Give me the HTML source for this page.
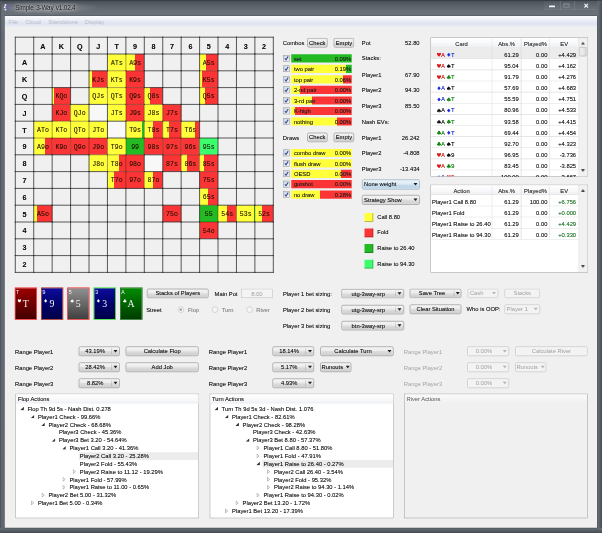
<!DOCTYPE html>
<html><head><meta charset="utf-8"><title>Simple 3-Way v1.02.4</title>
<style>
html,body{margin:0;padding:0;}
body{width:602px;height:533px;overflow:hidden;background:#646a72;font-family:"Liberation Sans",sans-serif;font-size:23.2px;color:#161616;position:relative;}
.t{text-shadow:0 0 1.4px rgba(0,0,0,.45);}
div{position:absolute;box-sizing:border-box;}
svg{display:block;}
.t{white-space:nowrap;line-height:40px;height:40px;margin-top:-20px;}
.r{text-align:right;}
.c{text-align:center;}
.btn{border:2.4px solid #747474;border-radius:6.8px;box-shadow:inset 0 0 0 2px rgba(255,255,255,.8);text-shadow:0 0 1.4px rgba(0,0,0,.45);background:linear-gradient(#f4f4f4 0%,#ebebeb 48%,#dcdcdc 52%,#cfcfcf 100%);text-align:center;white-space:nowrap;overflow:hidden;}
.dis{color:#a0a0a0;}
.btn.dis{border-color:#b4b4b4;background:#f3f3f3;text-shadow:none;}
.dis{text-shadow:none;}
.mono{font-family:"Liberation Mono",monospace;}
.pane{background:#fff;border:2.4px solid #9a9a9a;}
</style></head><body>
<div id="s" style="left:0;top:0;width:2408px;height:2132px;transform:scale(0.25);transform-origin:0 0;filter:blur(1.1px);">

<div style="left:0px;top:0px;width:2408px;height:2132px;background:linear-gradient(#3c4249 0px,#4e545c 7.2px,#5c626a 24px,#686e76 44px,#6c727a 64px,#646a72 160px,#62686f 100%);"></div>
<div style="left:0px;top:0px;width:5.6px;height:2132px;background:linear-gradient(90deg,#4a5058,#5c626a);"></div>
<div style="left:2390.4px;top:0px;width:17.6px;height:2132px;background:linear-gradient(90deg,#6a7078 0%,#5a6068 45%,#474d55 100%);"></div>
<div style="left:0px;top:2112px;width:2408px;height:20px;background:linear-gradient(#686e76 0%,#5a6068 45%,#454b53 100%);"></div>
<div style="left:0px;top:0px;width:2408px;height:3.2px;background:#353b42;"></div>
<div style="left:16.8px;top:61.6px;width:2373.6px;height:2052px;background:#4d535b;"></div>
<div style="left:8px;top:6px;width:380px;height:48px;background:radial-gradient(ellipse at 45% 50%,rgba(255,255,255,.22) 0%,rgba(255,255,255,.12) 45%,rgba(255,255,255,0) 75%);"></div>
<div style="left:13.6px;top:14.4px;width:29.6px;height:30.4px;"><svg width="29.6" height="30.4" viewBox="0 0 15 15"><path d="M11.5 1.5 L7 7.5 L11.5 13.5" stroke="#6f60b4" stroke-width="3.4" fill="none" stroke-linejoin="round"/><circle cx="4" cy="2.8" r="1.9" fill="#eeeef4"/><circle cx="2.6" cy="7.5" r="1.9" fill="#eeeef4"/><circle cx="4" cy="12.2" r="1.9" fill="#eeeef4"/></svg></div>
<div class="t" style="left:61.2px;top:29.6px;font-size:25.6px;letter-spacing:-0.8px;word-spacing:3.6px;color:#14161a;text-shadow:0 0 8px rgba(255,255,255,.7),0 0 16px rgba(255,255,255,.55),0 0 24px rgba(255,255,255,.35);">Simple 3-Way v1.02.4</div>
<div style="left:2196px;top:22.4px;width:24px;height:6.4px;background:#f0f2f4;border-radius:2px;"></div>
<div style="left:2254.4px;top:13.6px;width:24px;height:16.8px;border:3.6px solid #8c9096;border-top-width:4.8px;"></div>
<div style="left:2334.4px;top:12px;width:21.6px;height:21.6px;"><svg width="21.6" height="21.6" viewBox="0 0 7 7"><path d="M1.2 1.2 L5.8 5.8 M5.8 1.2 L1.2 5.8" stroke="#f2f3f5" stroke-width="1.5"/></svg></div>
<div style="left:2174px;top:3.2px;width:212px;height:37.6px;border:2px solid rgba(160,168,178,.55);border-top:none;border-radius:0 0 8px 8px;background:rgba(255,255,255,.04);"></div>
<div style="left:2240.8px;top:4px;width:2px;height:36px;background:rgba(160,168,178,.5);"></div>
<div style="left:2297.6px;top:4px;width:2px;height:36px;background:rgba(160,168,178,.5);"></div>
<div style="left:19.2px;top:64px;width:2368.8px;height:2047.2px;background:#f0f0f0;"></div>
<div style="left:19.2px;top:64px;width:2368.8px;height:40.8px;background:linear-gradient(#fbfcfe 0%,#eef1f8 35%,#dfe4f1 70%,#e6e9f4 100%);"></div>
<div class="t" style="left:34.4px;top:85.6px;color:#b9bdcb;font-size:23.6px;text-shadow:none;">File</div>
<div class="t" style="left:101.2px;top:85.6px;color:#b9bdcb;font-size:23.6px;text-shadow:none;">Cloud</div>
<div class="t" style="left:192.8px;top:85.6px;color:#b9bdcb;font-size:23.6px;text-shadow:none;">Standalone</div>
<div class="t" style="left:339.2px;top:85.6px;color:#b9bdcb;font-size:23.6px;text-shadow:none;">Display</div>
<div id="grid" style="left:0;top:0;width:0;height:0;">
<div style="left:61.2px;top:148.8px;width:1032.08px;height:940.8px;background:#f0f0f0;"></div>
<div style="left:429.8px;top:216px;width:73.72px;height:67.2px;background:#ffff3a;"><div class="t mono c" style="left:0;width:100%;top:50%;font-size:26.4px;margin-top:-17.6px;text-shadow:0 0 1.2px rgba(30,15,0,.5);color:rgba(30,15,0,.84);">ATs</div></div>
<div style="left:503.52px;top:216px;width:73.72px;height:67.2px;background:linear-gradient(90deg,#ffff3a 0%,#ffff3a 50%,#fb3535 50%,#fb3535 100%);"><div class="t mono c" style="left:0;width:100%;top:50%;font-size:26.4px;margin-top:-17.6px;text-shadow:0 0 1.2px rgba(30,15,0,.5);color:rgba(30,15,0,.84);">A9s</div></div>
<div style="left:798.4px;top:216px;width:73.72px;height:67.2px;background:linear-gradient(90deg,#ffff3a 0%,#ffff3a 35%,#fb3535 35%,#fb3535 100%);"><div class="t mono c" style="left:0;width:100%;top:50%;font-size:26.4px;margin-top:-17.6px;text-shadow:0 0 1.2px rgba(30,15,0,.5);color:rgba(30,15,0,.84);">A5s</div></div>
<div style="left:356.08px;top:283.2px;width:73.72px;height:67.2px;background:linear-gradient(90deg,#ffff3a 0%,#ffff3a 15%,#fb3535 15%,#fb3535 100%);"><div class="t mono c" style="left:0;width:100%;top:50%;font-size:26.4px;margin-top:-17.6px;text-shadow:0 0 1.2px rgba(30,15,0,.5);color:rgba(30,15,0,.84);">KJs</div></div>
<div style="left:429.8px;top:283.2px;width:73.72px;height:67.2px;background:#ffff3a;"><div class="t mono c" style="left:0;width:100%;top:50%;font-size:26.4px;margin-top:-17.6px;text-shadow:0 0 1.2px rgba(30,15,0,.5);color:rgba(30,15,0,.84);">KTs</div></div>
<div style="left:503.52px;top:283.2px;width:73.72px;height:67.2px;background:#fb3535;"><div class="t mono c" style="left:0;width:100%;top:50%;font-size:26.4px;margin-top:-17.6px;text-shadow:0 0 1.2px rgba(30,15,0,.5);color:rgba(30,15,0,.84);">K9s</div></div>
<div style="left:798.4px;top:283.2px;width:73.72px;height:67.2px;background:linear-gradient(90deg,#ffff3a 0%,#ffff3a 12%,#fb3535 12%,#fb3535 100%);"><div class="t mono c" style="left:0;width:100%;top:50%;font-size:26.4px;margin-top:-17.6px;text-shadow:0 0 1.2px rgba(30,15,0,.5);color:rgba(30,15,0,.84);">K5s</div></div>
<div style="left:208.64px;top:350.4px;width:73.72px;height:67.2px;background:linear-gradient(90deg,#ffff3a 0%,#ffff3a 10%,#fb3535 10%,#fb3535 100%);"><div class="t mono c" style="left:0;width:100%;top:50%;font-size:26.4px;margin-top:-17.6px;text-shadow:0 0 1.2px rgba(30,15,0,.5);color:rgba(30,15,0,.84);">KQo</div></div>
<div style="left:356.08px;top:350.4px;width:73.72px;height:67.2px;background:#ffff3a;"><div class="t mono c" style="left:0;width:100%;top:50%;font-size:26.4px;margin-top:-17.6px;text-shadow:0 0 1.2px rgba(30,15,0,.5);color:rgba(30,15,0,.84);">QJs</div></div>
<div style="left:429.8px;top:350.4px;width:73.72px;height:67.2px;background:#ffff3a;"><div class="t mono c" style="left:0;width:100%;top:50%;font-size:26.4px;margin-top:-17.6px;text-shadow:0 0 1.2px rgba(30,15,0,.5);color:rgba(30,15,0,.84);">QTs</div></div>
<div style="left:503.52px;top:350.4px;width:73.72px;height:67.2px;background:#fb3535;"><div class="t mono c" style="left:0;width:100%;top:50%;font-size:26.4px;margin-top:-17.6px;text-shadow:0 0 1.2px rgba(30,15,0,.5);color:rgba(30,15,0,.84);">Q9s</div></div>
<div style="left:577.24px;top:350.4px;width:73.72px;height:67.2px;background:linear-gradient(90deg,#ffff3a 0%,#ffff3a 30%,#fb3535 30%,#fb3535 100%);"><div class="t mono c" style="left:0;width:100%;top:50%;font-size:26.4px;margin-top:-17.6px;text-shadow:0 0 1.2px rgba(30,15,0,.5);color:rgba(30,15,0,.84);">Q8s</div></div>
<div style="left:798.4px;top:350.4px;width:73.72px;height:67.2px;background:linear-gradient(90deg,#ffff3a 0%,#ffff3a 30%,#fb3535 30%,#fb3535 100%);"><div class="t mono c" style="left:0;width:100%;top:50%;font-size:26.4px;margin-top:-17.6px;text-shadow:0 0 1.2px rgba(30,15,0,.5);color:rgba(30,15,0,.84);">Q5s</div></div>
<div style="left:208.64px;top:417.6px;width:73.72px;height:67.2px;background:#fb3535;"><div class="t mono c" style="left:0;width:100%;top:50%;font-size:26.4px;margin-top:-17.6px;text-shadow:0 0 1.2px rgba(30,15,0,.5);color:rgba(30,15,0,.84);">KJo</div></div>
<div style="left:282.36px;top:417.6px;width:73.72px;height:67.2px;background:#ffff3a;"><div class="t mono c" style="left:0;width:100%;top:50%;font-size:26.4px;margin-top:-17.6px;text-shadow:0 0 1.2px rgba(30,15,0,.5);color:rgba(30,15,0,.84);">QJo</div></div>
<div style="left:429.8px;top:417.6px;width:73.72px;height:67.2px;background:#ffff3a;"><div class="t mono c" style="left:0;width:100%;top:50%;font-size:26.4px;margin-top:-17.6px;text-shadow:0 0 1.2px rgba(30,15,0,.5);color:rgba(30,15,0,.84);">JTs</div></div>
<div style="left:503.52px;top:417.6px;width:73.72px;height:67.2px;background:#fb3535;"><div class="t mono c" style="left:0;width:100%;top:50%;font-size:26.4px;margin-top:-17.6px;text-shadow:0 0 1.2px rgba(30,15,0,.5);color:rgba(30,15,0,.84);">J9s</div></div>
<div style="left:577.24px;top:417.6px;width:73.72px;height:67.2px;background:#ffff3a;"><div class="t mono c" style="left:0;width:100%;top:50%;font-size:26.4px;margin-top:-17.6px;text-shadow:0 0 1.2px rgba(30,15,0,.5);color:rgba(30,15,0,.84);">J8s</div></div>
<div style="left:650.96px;top:417.6px;width:73.72px;height:67.2px;background:#fb3535;"><div class="t mono c" style="left:0;width:100%;top:50%;font-size:26.4px;margin-top:-17.6px;text-shadow:0 0 1.2px rgba(30,15,0,.5);color:rgba(30,15,0,.84);">J7s</div></div>
<div style="left:134.92px;top:484.8px;width:73.72px;height:67.2px;background:#ffff3a;"><div class="t mono c" style="left:0;width:100%;top:50%;font-size:26.4px;margin-top:-17.6px;text-shadow:0 0 1.2px rgba(30,15,0,.5);color:rgba(30,15,0,.84);">ATo</div></div>
<div style="left:208.64px;top:484.8px;width:73.72px;height:67.2px;background:#ffff3a;"><div class="t mono c" style="left:0;width:100%;top:50%;font-size:26.4px;margin-top:-17.6px;text-shadow:0 0 1.2px rgba(30,15,0,.5);color:rgba(30,15,0,.84);">KTo</div></div>
<div style="left:282.36px;top:484.8px;width:73.72px;height:67.2px;background:#ffff3a;"><div class="t mono c" style="left:0;width:100%;top:50%;font-size:26.4px;margin-top:-17.6px;text-shadow:0 0 1.2px rgba(30,15,0,.5);color:rgba(30,15,0,.84);">QTo</div></div>
<div style="left:356.08px;top:484.8px;width:73.72px;height:67.2px;background:linear-gradient(90deg,#ffff3a 0%,#ffff3a 95%,#fb3535 95%,#fb3535 100%);"><div class="t mono c" style="left:0;width:100%;top:50%;font-size:26.4px;margin-top:-17.6px;text-shadow:0 0 1.2px rgba(30,15,0,.5);color:rgba(30,15,0,.84);">JTo</div></div>
<div style="left:503.52px;top:484.8px;width:73.72px;height:67.2px;background:linear-gradient(90deg,#ffff3a 0%,#ffff3a 90%,#24ba24 90%,#24ba24 100%);"><div class="t mono c" style="left:0;width:100%;top:50%;font-size:26.4px;margin-top:-17.6px;text-shadow:0 0 1.2px rgba(30,15,0,.5);color:rgba(30,15,0,.84);">T9s</div></div>
<div style="left:577.24px;top:484.8px;width:73.72px;height:67.2px;background:linear-gradient(90deg,#ffff3a 0%,#ffff3a 50%,#fb3535 50%,#fb3535 100%);"><div class="t mono c" style="left:0;width:100%;top:50%;font-size:26.4px;margin-top:-17.6px;text-shadow:0 0 1.2px rgba(30,15,0,.5);color:rgba(30,15,0,.84);">T8s</div></div>
<div style="left:650.96px;top:484.8px;width:73.72px;height:67.2px;background:linear-gradient(90deg,#ffff3a 0%,#ffff3a 35%,#fb3535 35%,#fb3535 100%);"><div class="t mono c" style="left:0;width:100%;top:50%;font-size:26.4px;margin-top:-17.6px;text-shadow:0 0 1.2px rgba(30,15,0,.5);color:rgba(30,15,0,.84);">T7s</div></div>
<div style="left:724.68px;top:484.8px;width:73.72px;height:67.2px;background:linear-gradient(90deg,#ffff3a 0%,#ffff3a 75%,#fb3535 75%,#fb3535 100%);"><div class="t mono c" style="left:0;width:100%;top:50%;font-size:26.4px;margin-top:-17.6px;text-shadow:0 0 1.2px rgba(30,15,0,.5);color:rgba(30,15,0,.84);">T6s</div></div>
<div style="left:134.92px;top:552px;width:73.72px;height:67.2px;background:linear-gradient(90deg,#ffff3a 0%,#ffff3a 63%,#fb3535 63%,#fb3535 100%);"><div class="t mono c" style="left:0;width:100%;top:50%;font-size:26.4px;margin-top:-17.6px;text-shadow:0 0 1.2px rgba(30,15,0,.5);color:rgba(30,15,0,.84);">A9o</div></div>
<div style="left:208.64px;top:552px;width:73.72px;height:67.2px;background:#fb3535;"><div class="t mono c" style="left:0;width:100%;top:50%;font-size:26.4px;margin-top:-17.6px;text-shadow:0 0 1.2px rgba(30,15,0,.5);color:rgba(30,15,0,.84);">K9o</div></div>
<div style="left:282.36px;top:552px;width:73.72px;height:67.2px;background:#fb3535;"><div class="t mono c" style="left:0;width:100%;top:50%;font-size:26.4px;margin-top:-17.6px;text-shadow:0 0 1.2px rgba(30,15,0,.5);color:rgba(30,15,0,.84);">Q9o</div></div>
<div style="left:356.08px;top:552px;width:73.72px;height:67.2px;background:#fb3535;"><div class="t mono c" style="left:0;width:100%;top:50%;font-size:26.4px;margin-top:-17.6px;text-shadow:0 0 1.2px rgba(30,15,0,.5);color:rgba(30,15,0,.84);">J9o</div></div>
<div style="left:429.8px;top:552px;width:73.72px;height:67.2px;background:#ffff3a;"><div class="t mono c" style="left:0;width:100%;top:50%;font-size:26.4px;margin-top:-17.6px;text-shadow:0 0 1.2px rgba(30,15,0,.5);color:rgba(30,15,0,.84);">T9o</div></div>
<div style="left:503.52px;top:552px;width:73.72px;height:67.2px;background:#24ba24;"><div class="t mono c" style="left:0;width:100%;top:50%;font-size:26.4px;margin-top:-17.6px;text-shadow:0 0 1.2px rgba(30,15,0,.5);color:rgba(30,15,0,.84);">99</div></div>
<div style="left:577.24px;top:552px;width:73.72px;height:67.2px;background:#fb3535;"><div class="t mono c" style="left:0;width:100%;top:50%;font-size:26.4px;margin-top:-17.6px;text-shadow:0 0 1.2px rgba(30,15,0,.5);color:rgba(30,15,0,.84);">98s</div></div>
<div style="left:650.96px;top:552px;width:73.72px;height:67.2px;background:#fb3535;"><div class="t mono c" style="left:0;width:100%;top:50%;font-size:26.4px;margin-top:-17.6px;text-shadow:0 0 1.2px rgba(30,15,0,.5);color:rgba(30,15,0,.84);">97s</div></div>
<div style="left:724.68px;top:552px;width:73.72px;height:67.2px;background:#fb3535;"><div class="t mono c" style="left:0;width:100%;top:50%;font-size:26.4px;margin-top:-17.6px;text-shadow:0 0 1.2px rgba(30,15,0,.5);color:rgba(30,15,0,.84);">96s</div></div>
<div style="left:798.4px;top:552px;width:73.72px;height:67.2px;background:#3cff6e;"><div class="t mono c" style="left:0;width:100%;top:50%;font-size:26.4px;margin-top:-17.6px;text-shadow:0 0 1.2px rgba(30,15,0,.5);color:rgba(30,15,0,.84);">95s</div></div>
<div style="left:356.08px;top:619.2px;width:73.72px;height:67.2px;background:#ffff3a;"><div class="t mono c" style="left:0;width:100%;top:50%;font-size:26.4px;margin-top:-17.6px;text-shadow:0 0 1.2px rgba(30,15,0,.5);color:rgba(30,15,0,.84);">J8o</div></div>
<div style="left:429.8px;top:619.2px;width:73.72px;height:67.2px;background:linear-gradient(90deg,#ffff3a 0%,#ffff3a 60%,#fb3535 60%,#fb3535 100%);"><div class="t mono c" style="left:0;width:100%;top:50%;font-size:26.4px;margin-top:-17.6px;text-shadow:0 0 1.2px rgba(30,15,0,.5);color:rgba(30,15,0,.84);">T8o</div></div>
<div style="left:503.52px;top:619.2px;width:73.72px;height:67.2px;background:#fb3535;"><div class="t mono c" style="left:0;width:100%;top:50%;font-size:26.4px;margin-top:-17.6px;text-shadow:0 0 1.2px rgba(30,15,0,.5);color:rgba(30,15,0,.84);">98o</div></div>
<div style="left:650.96px;top:619.2px;width:73.72px;height:67.2px;background:#fb3535;"><div class="t mono c" style="left:0;width:100%;top:50%;font-size:26.4px;margin-top:-17.6px;text-shadow:0 0 1.2px rgba(30,15,0,.5);color:rgba(30,15,0,.84);">87s</div></div>
<div style="left:724.68px;top:619.2px;width:73.72px;height:67.2px;background:linear-gradient(90deg,#ffff3a 0%,#ffff3a 30%,#fb3535 30%,#fb3535 100%);"><div class="t mono c" style="left:0;width:100%;top:50%;font-size:26.4px;margin-top:-17.6px;text-shadow:0 0 1.2px rgba(30,15,0,.5);color:rgba(30,15,0,.84);">86s</div></div>
<div style="left:798.4px;top:619.2px;width:73.72px;height:67.2px;background:linear-gradient(90deg,#ffff3a 0%,#ffff3a 25%,#fb3535 25%,#fb3535 100%);"><div class="t mono c" style="left:0;width:100%;top:50%;font-size:26.4px;margin-top:-17.6px;text-shadow:0 0 1.2px rgba(30,15,0,.5);color:rgba(30,15,0,.84);">85s</div></div>
<div style="left:429.8px;top:686.4px;width:73.72px;height:67.2px;background:linear-gradient(90deg,#ffff3a 0%,#ffff3a 33%,#fb3535 33%,#fb3535 100%);"><div class="t mono c" style="left:0;width:100%;top:50%;font-size:26.4px;margin-top:-17.6px;text-shadow:0 0 1.2px rgba(30,15,0,.5);color:rgba(30,15,0,.84);">T7o</div></div>
<div style="left:503.52px;top:686.4px;width:73.72px;height:67.2px;background:#fb3535;"><div class="t mono c" style="left:0;width:100%;top:50%;font-size:26.4px;margin-top:-17.6px;text-shadow:0 0 1.2px rgba(30,15,0,.5);color:rgba(30,15,0,.84);">97o</div></div>
<div style="left:577.24px;top:686.4px;width:73.72px;height:67.2px;background:linear-gradient(90deg,#ffff3a 0%,#ffff3a 45%,#fb3535 45%,#fb3535 100%);"><div class="t mono c" style="left:0;width:100%;top:50%;font-size:26.4px;margin-top:-17.6px;text-shadow:0 0 1.2px rgba(30,15,0,.5);color:rgba(30,15,0,.84);">87o</div></div>
<div style="left:798.4px;top:686.4px;width:73.72px;height:67.2px;background:#fb3535;"><div class="t mono c" style="left:0;width:100%;top:50%;font-size:26.4px;margin-top:-17.6px;text-shadow:0 0 1.2px rgba(30,15,0,.5);color:rgba(30,15,0,.84);">75s</div></div>
<div style="left:798.4px;top:753.6px;width:73.72px;height:67.2px;background:linear-gradient(90deg,#ffff3a 0%,#ffff3a 45%,#fb3535 45%,#fb3535 100%);"><div class="t mono c" style="left:0;width:100%;top:50%;font-size:26.4px;margin-top:-17.6px;text-shadow:0 0 1.2px rgba(30,15,0,.5);color:rgba(30,15,0,.84);">65s</div></div>
<div style="left:134.92px;top:820.8px;width:73.72px;height:67.2px;background:linear-gradient(90deg,#ffff3a 0%,#ffff3a 20%,#fb3535 20%,#fb3535 100%);"><div class="t mono c" style="left:0;width:100%;top:50%;font-size:26.4px;margin-top:-17.6px;text-shadow:0 0 1.2px rgba(30,15,0,.5);color:rgba(30,15,0,.84);">A5o</div></div>
<div style="left:650.96px;top:820.8px;width:73.72px;height:67.2px;background:#fb3535;"><div class="t mono c" style="left:0;width:100%;top:50%;font-size:26.4px;margin-top:-17.6px;text-shadow:0 0 1.2px rgba(30,15,0,.5);color:rgba(30,15,0,.84);">75o</div></div>
<div style="left:798.4px;top:820.8px;width:73.72px;height:67.2px;background:#24ba24;"><div class="t mono c" style="left:0;width:100%;top:50%;font-size:26.4px;margin-top:-17.6px;text-shadow:0 0 1.2px rgba(30,15,0,.5);color:rgba(30,15,0,.84);">55</div></div>
<div style="left:872.12px;top:820.8px;width:73.72px;height:67.2px;background:linear-gradient(90deg,#ffff3a 0%,#ffff3a 50%,#fb3535 50%,#fb3535 100%);"><div class="t mono c" style="left:0;width:100%;top:50%;font-size:26.4px;margin-top:-17.6px;text-shadow:0 0 1.2px rgba(30,15,0,.5);color:rgba(30,15,0,.84);">54s</div></div>
<div style="left:945.84px;top:820.8px;width:73.72px;height:67.2px;background:linear-gradient(90deg,#ffff3a 0%,#ffff3a 92%,#24ba24 92%,#24ba24 100%);"><div class="t mono c" style="left:0;width:100%;top:50%;font-size:26.4px;margin-top:-17.6px;text-shadow:0 0 1.2px rgba(30,15,0,.5);color:rgba(30,15,0,.84);">53s</div></div>
<div style="left:1019.56px;top:820.8px;width:73.72px;height:67.2px;background:linear-gradient(90deg,#ffff3a 0%,#ffff3a 40%,#fb3535 40%,#fb3535 100%);"><div class="t mono c" style="left:0;width:100%;top:50%;font-size:26.4px;margin-top:-17.6px;text-shadow:0 0 1.2px rgba(30,15,0,.5);color:rgba(30,15,0,.84);">52s</div></div>
<div style="left:798.4px;top:888px;width:73.72px;height:67.2px;background:linear-gradient(90deg,#ffff3a 0%,#ffff3a 5%,#fb3535 5%,#fb3535 100%);"><div class="t mono c" style="left:0;width:100%;top:50%;font-size:26.4px;margin-top:-17.6px;text-shadow:0 0 1.2px rgba(30,15,0,.5);color:rgba(30,15,0,.84);">54o</div></div>
<div style="left:577.24px;top:619.2px;width:73.72px;height:67.2px;background:#f8f8f8;"></div>
<div style="left:429.8px;top:484.8px;width:73.72px;height:67.2px;background:#f8f8f8;"></div>
<div style="left:356.08px;top:417.6px;width:73.72px;height:67.2px;background:#f8f8f8;"></div>
<svg style="position:absolute;left:0px;top:0px;width:1200px;height:1200px;" viewBox="0 0 300 300"><path d="M52.16 120.75v17.70M52.16 137.55v17.70M70.59 103.95v17.70M70.59 120.75v17.70M70.59 137.55v17.70M89.02 120.75v17.70M89.02 137.55v17.70M107.45 70.35v17.70M107.45 87.15v17.70M107.45 137.55v17.70M107.45 154.35v17.70M125.88 53.55v17.70M125.88 70.35v17.70M125.88 87.15v17.70M125.88 103.95v17.70M125.88 137.55v17.70M125.88 154.35v17.70M125.88 171.15v17.70M144.31 87.15v17.70M144.31 103.95v17.70M144.31 120.75v17.70M144.31 137.55v17.70M144.31 171.15v17.70M162.74 103.95v17.70M162.74 120.75v17.70M162.74 137.55v17.70M181.17 120.75v17.70M181.17 137.55v17.70M181.17 154.35v17.70M199.60 137.55v17.70M199.60 154.35v17.70M218.03 204.75v17.70M236.46 204.75v17.70M254.89 204.75v17.70M107.00 70.80h19.33M125.43 70.80h19.33M199.15 70.80h19.33M88.57 87.60h19.33M107.00 87.60h19.33M125.43 87.60h19.33M199.15 87.60h19.33M51.71 104.40h19.33M107.00 104.40h19.33M125.43 104.40h19.33M143.86 104.40h19.33M51.71 121.20h19.33M70.14 121.20h19.33M125.43 121.20h19.33M143.86 121.20h19.33M162.29 121.20h19.33M33.28 138.00h19.33M51.71 138.00h19.33M70.14 138.00h19.33M88.57 138.00h19.33M125.43 138.00h19.33M143.86 138.00h19.33M162.29 138.00h19.33M180.72 138.00h19.33M88.57 154.80h19.33M107.00 154.80h19.33M125.43 154.80h19.33M162.29 154.80h19.33M180.72 154.80h19.33M199.15 154.80h19.33M107.00 171.60h19.33M125.43 171.60h19.33M199.15 171.60h19.33M199.15 188.40h19.33M199.15 205.20h19.33M199.15 222.00h19.33" stroke="rgba(50,25,0,.5)" stroke-width="0.8" fill="none"/><path d="M15.30 36.75v17.70M15.30 53.55v17.70M15.30 70.35v17.70M15.30 87.15v17.70M15.30 103.95v17.70M15.30 120.75v17.70M15.30 137.55v17.70M15.30 154.35v17.70M15.30 171.15v17.70M15.30 187.95v17.70M15.30 204.75v17.70M15.30 221.55v17.70M15.30 238.35v17.70M15.30 255.15v17.70M33.73 36.75v17.70M33.73 53.55v17.70M33.73 70.35v17.70M33.73 87.15v17.70M33.73 103.95v17.70M33.73 120.75v17.70M33.73 137.55v17.70M33.73 154.35v17.70M33.73 171.15v17.70M33.73 187.95v17.70M33.73 204.75v17.70M33.73 221.55v17.70M33.73 238.35v17.70M33.73 255.15v17.70M52.16 36.75v17.70M52.16 53.55v17.70M52.16 70.35v17.70M52.16 87.15v17.70M52.16 103.95v17.70M52.16 154.35v17.70M52.16 171.15v17.70M52.16 187.95v17.70M52.16 204.75v17.70M52.16 221.55v17.70M52.16 238.35v17.70M52.16 255.15v17.70M70.59 36.75v17.70M70.59 53.55v17.70M70.59 70.35v17.70M70.59 87.15v17.70M70.59 154.35v17.70M70.59 171.15v17.70M70.59 187.95v17.70M70.59 204.75v17.70M70.59 221.55v17.70M70.59 238.35v17.70M70.59 255.15v17.70M89.02 36.75v17.70M89.02 53.55v17.70M89.02 70.35v17.70M89.02 87.15v17.70M89.02 103.95v17.70M89.02 154.35v17.70M89.02 171.15v17.70M89.02 187.95v17.70M89.02 204.75v17.70M89.02 221.55v17.70M89.02 238.35v17.70M89.02 255.15v17.70M107.45 36.75v17.70M107.45 53.55v17.70M107.45 103.95v17.70M107.45 120.75v17.70M107.45 171.15v17.70M107.45 187.95v17.70M107.45 204.75v17.70M107.45 221.55v17.70M107.45 238.35v17.70M107.45 255.15v17.70M125.88 36.75v17.70M125.88 120.75v17.70M125.88 187.95v17.70M125.88 204.75v17.70M125.88 221.55v17.70M125.88 238.35v17.70M125.88 255.15v17.70M144.31 36.75v17.70M144.31 53.55v17.70M144.31 70.35v17.70M144.31 154.35v17.70M144.31 187.95v17.70M144.31 204.75v17.70M144.31 221.55v17.70M144.31 238.35v17.70M144.31 255.15v17.70M162.74 36.75v17.70M162.74 53.55v17.70M162.74 70.35v17.70M162.74 87.15v17.70M162.74 154.35v17.70M162.74 171.15v17.70M162.74 187.95v17.70M162.74 204.75v17.70M162.74 221.55v17.70M162.74 238.35v17.70M162.74 255.15v17.70M181.17 36.75v17.70M181.17 53.55v17.70M181.17 70.35v17.70M181.17 87.15v17.70M181.17 103.95v17.70M181.17 171.15v17.70M181.17 187.95v17.70M181.17 204.75v17.70M181.17 221.55v17.70M181.17 238.35v17.70M181.17 255.15v17.70M199.60 36.75v17.70M199.60 53.55v17.70M199.60 70.35v17.70M199.60 87.15v17.70M199.60 103.95v17.70M199.60 120.75v17.70M199.60 171.15v17.70M199.60 187.95v17.70M199.60 204.75v17.70M199.60 221.55v17.70M199.60 238.35v17.70M199.60 255.15v17.70M218.03 36.75v17.70M218.03 53.55v17.70M218.03 70.35v17.70M218.03 87.15v17.70M218.03 103.95v17.70M218.03 120.75v17.70M218.03 137.55v17.70M218.03 154.35v17.70M218.03 171.15v17.70M218.03 187.95v17.70M218.03 221.55v17.70M218.03 238.35v17.70M218.03 255.15v17.70M236.46 36.75v17.70M236.46 53.55v17.70M236.46 70.35v17.70M236.46 87.15v17.70M236.46 103.95v17.70M236.46 120.75v17.70M236.46 137.55v17.70M236.46 154.35v17.70M236.46 171.15v17.70M236.46 187.95v17.70M236.46 221.55v17.70M236.46 238.35v17.70M236.46 255.15v17.70M254.89 36.75v17.70M254.89 53.55v17.70M254.89 70.35v17.70M254.89 87.15v17.70M254.89 103.95v17.70M254.89 120.75v17.70M254.89 137.55v17.70M254.89 154.35v17.70M254.89 171.15v17.70M254.89 187.95v17.70M254.89 221.55v17.70M254.89 238.35v17.70M254.89 255.15v17.70M273.32 36.75v17.70M273.32 53.55v17.70M273.32 70.35v17.70M273.32 87.15v17.70M273.32 103.95v17.70M273.32 120.75v17.70M273.32 137.55v17.70M273.32 154.35v17.70M273.32 171.15v17.70M273.32 187.95v17.70M273.32 204.75v17.70M273.32 221.55v17.70M273.32 238.35v17.70M273.32 255.15v17.70M14.85 37.20h19.33M33.28 37.20h19.33M51.71 37.20h19.33M70.14 37.20h19.33M88.57 37.20h19.33M107.00 37.20h19.33M125.43 37.20h19.33M143.86 37.20h19.33M162.29 37.20h19.33M180.72 37.20h19.33M199.15 37.20h19.33M217.58 37.20h19.33M236.01 37.20h19.33M254.44 37.20h19.33M14.85 54.00h19.33M33.28 54.00h19.33M51.71 54.00h19.33M70.14 54.00h19.33M88.57 54.00h19.33M107.00 54.00h19.33M125.43 54.00h19.33M143.86 54.00h19.33M162.29 54.00h19.33M180.72 54.00h19.33M199.15 54.00h19.33M217.58 54.00h19.33M236.01 54.00h19.33M254.44 54.00h19.33M14.85 70.80h19.33M33.28 70.80h19.33M51.71 70.80h19.33M70.14 70.80h19.33M88.57 70.80h19.33M143.86 70.80h19.33M162.29 70.80h19.33M180.72 70.80h19.33M217.58 70.80h19.33M236.01 70.80h19.33M254.44 70.80h19.33M14.85 87.60h19.33M33.28 87.60h19.33M51.71 87.60h19.33M70.14 87.60h19.33M143.86 87.60h19.33M162.29 87.60h19.33M180.72 87.60h19.33M217.58 87.60h19.33M236.01 87.60h19.33M254.44 87.60h19.33M14.85 104.40h19.33M33.28 104.40h19.33M70.14 104.40h19.33M88.57 104.40h19.33M162.29 104.40h19.33M180.72 104.40h19.33M199.15 104.40h19.33M217.58 104.40h19.33M236.01 104.40h19.33M254.44 104.40h19.33M14.85 121.20h19.33M33.28 121.20h19.33M88.57 121.20h19.33M107.00 121.20h19.33M180.72 121.20h19.33M199.15 121.20h19.33M217.58 121.20h19.33M236.01 121.20h19.33M254.44 121.20h19.33M14.85 138.00h19.33M107.00 138.00h19.33M199.15 138.00h19.33M217.58 138.00h19.33M236.01 138.00h19.33M254.44 138.00h19.33M14.85 154.80h19.33M33.28 154.80h19.33M51.71 154.80h19.33M70.14 154.80h19.33M143.86 154.80h19.33M217.58 154.80h19.33M236.01 154.80h19.33M254.44 154.80h19.33M14.85 171.60h19.33M33.28 171.60h19.33M51.71 171.60h19.33M70.14 171.60h19.33M88.57 171.60h19.33M143.86 171.60h19.33M162.29 171.60h19.33M180.72 171.60h19.33M217.58 171.60h19.33M236.01 171.60h19.33M254.44 171.60h19.33M14.85 188.40h19.33M33.28 188.40h19.33M51.71 188.40h19.33M70.14 188.40h19.33M88.57 188.40h19.33M107.00 188.40h19.33M125.43 188.40h19.33M143.86 188.40h19.33M162.29 188.40h19.33M180.72 188.40h19.33M217.58 188.40h19.33M236.01 188.40h19.33M254.44 188.40h19.33M14.85 205.20h19.33M33.28 205.20h19.33M51.71 205.20h19.33M70.14 205.20h19.33M88.57 205.20h19.33M107.00 205.20h19.33M125.43 205.20h19.33M143.86 205.20h19.33M162.29 205.20h19.33M180.72 205.20h19.33M217.58 205.20h19.33M236.01 205.20h19.33M254.44 205.20h19.33M14.85 222.00h19.33M33.28 222.00h19.33M51.71 222.00h19.33M70.14 222.00h19.33M88.57 222.00h19.33M107.00 222.00h19.33M125.43 222.00h19.33M143.86 222.00h19.33M162.29 222.00h19.33M180.72 222.00h19.33M217.58 222.00h19.33M236.01 222.00h19.33M254.44 222.00h19.33M14.85 238.80h19.33M33.28 238.80h19.33M51.71 238.80h19.33M70.14 238.80h19.33M88.57 238.80h19.33M107.00 238.80h19.33M125.43 238.80h19.33M143.86 238.80h19.33M162.29 238.80h19.33M180.72 238.80h19.33M199.15 238.80h19.33M217.58 238.80h19.33M236.01 238.80h19.33M254.44 238.80h19.33M14.85 255.60h19.33M33.28 255.60h19.33M51.71 255.60h19.33M70.14 255.60h19.33M88.57 255.60h19.33M107.00 255.60h19.33M125.43 255.60h19.33M143.86 255.60h19.33M162.29 255.60h19.33M180.72 255.60h19.33M199.15 255.60h19.33M217.58 255.60h19.33M236.01 255.60h19.33M254.44 255.60h19.33M14.85 272.40h19.33M33.28 272.40h19.33M51.71 272.40h19.33M70.14 272.40h19.33M88.57 272.40h19.33M107.00 272.40h19.33M125.43 272.40h19.33M143.86 272.40h19.33M162.29 272.40h19.33M180.72 272.40h19.33M199.15 272.40h19.33M217.58 272.40h19.33M236.01 272.40h19.33M254.44 272.40h19.33" stroke="rgba(38,38,38,.8)" stroke-width="0.95" fill="none"/></svg>
<div class="t c" style="left:-68.2px;width:480px;top:183.6px;font-weight:bold;font-size:28.8px;color:#111;">A</div>
<div class="t c" style="left:-141.92px;width:480px;top:250.8px;font-weight:bold;font-size:28.8px;color:#111;">A</div>
<div class="t c" style="left:5.52px;width:480px;top:183.6px;font-weight:bold;font-size:28.8px;color:#111;">K</div>
<div class="t c" style="left:-141.92px;width:480px;top:318px;font-weight:bold;font-size:28.8px;color:#111;">K</div>
<div class="t c" style="left:79.2px;width:480px;top:183.6px;font-weight:bold;font-size:28.8px;color:#111;">Q</div>
<div class="t c" style="left:-141.92px;width:480px;top:385.2px;font-weight:bold;font-size:28.8px;color:#111;">Q</div>
<div class="t c" style="left:152.92px;width:480px;top:183.6px;font-weight:bold;font-size:28.8px;color:#111;">J</div>
<div class="t c" style="left:-141.92px;width:480px;top:452.4px;font-weight:bold;font-size:28.8px;color:#111;">J</div>
<div class="t c" style="left:226.64px;width:480px;top:183.6px;font-weight:bold;font-size:28.8px;color:#111;">T</div>
<div class="t c" style="left:-141.92px;width:480px;top:519.6px;font-weight:bold;font-size:28.8px;color:#111;">T</div>
<div class="t c" style="left:300.36px;width:480px;top:183.6px;font-weight:bold;font-size:28.8px;color:#111;">9</div>
<div class="t c" style="left:-141.92px;width:480px;top:586.8px;font-weight:bold;font-size:28.8px;color:#111;">9</div>
<div class="t c" style="left:374.12px;width:480px;top:183.6px;font-weight:bold;font-size:28.8px;color:#111;">8</div>
<div class="t c" style="left:-141.92px;width:480px;top:654px;font-weight:bold;font-size:28.8px;color:#111;">8</div>
<div class="t c" style="left:447.84px;width:480px;top:183.6px;font-weight:bold;font-size:28.8px;color:#111;">7</div>
<div class="t c" style="left:-141.92px;width:480px;top:721.2px;font-weight:bold;font-size:28.8px;color:#111;">7</div>
<div class="t c" style="left:521.56px;width:480px;top:183.6px;font-weight:bold;font-size:28.8px;color:#111;">6</div>
<div class="t c" style="left:-141.92px;width:480px;top:788.4px;font-weight:bold;font-size:28.8px;color:#111;">6</div>
<div class="t c" style="left:595.24px;width:480px;top:183.6px;font-weight:bold;font-size:28.8px;color:#111;">5</div>
<div class="t c" style="left:-141.92px;width:480px;top:855.6px;font-weight:bold;font-size:28.8px;color:#111;">5</div>
<div class="t c" style="left:669px;width:480px;top:183.6px;font-weight:bold;font-size:28.8px;color:#111;">4</div>
<div class="t c" style="left:-141.92px;width:480px;top:922.8px;font-weight:bold;font-size:28.8px;color:#111;">4</div>
<div class="t c" style="left:742.72px;width:480px;top:183.6px;font-weight:bold;font-size:28.8px;color:#111;">3</div>
<div class="t c" style="left:-141.92px;width:480px;top:990px;font-weight:bold;font-size:28.8px;color:#111;">3</div>
<div class="t c" style="left:816.44px;width:480px;top:183.6px;font-weight:bold;font-size:28.8px;color:#111;">2</div>
<div class="t c" style="left:-141.92px;width:480px;top:1057.2px;font-weight:bold;font-size:28.8px;color:#111;">2</div>
</div>
<div class="t" style="left:1131.2px;top:171.2px;">Combos</div>
<div class="btn" style="left:1228.8px;top:152px;width:80.8px;height:37.6px;line-height:32.8px;font-size:23.2px;">Check</div>
<div class="btn" style="left:1335.2px;top:152px;width:80.8px;height:37.6px;line-height:32.8px;font-size:23.2px;">Empty</div>
<div style="left:1132px;top:220px;width:26.4px;height:26.4px;border:2.4px solid #8e8f8f;background:linear-gradient(135deg,#cdd5de,#eef2f6);"><svg style="position:absolute;left:0.8px;top:0.4px" width="21.6" height="21.6" viewBox="0 0 10 10"><path d="M2 5.2 L4.2 8 L8.2 1.6" stroke="#3a4a9a" stroke-width="1.9" fill="none"/></svg></div>
<div style="left:1165.2px;top:217.2px;width:241.6px;height:32.8px;background:linear-gradient(90deg,#24ba24 0.0%,#24ba24 100.0%);"><div class="t" style="left:10.4px;top:50%;color:#222;">set</div><div class="t r" style="right:2.4px;top:50%;color:#222;">0.09%</div></div>
<div style="left:1132px;top:262.08px;width:26.4px;height:26.4px;border:2.4px solid #8e8f8f;background:linear-gradient(135deg,#cdd5de,#eef2f6);"><svg style="position:absolute;left:0.8px;top:0.4px" width="21.6" height="21.6" viewBox="0 0 10 10"><path d="M2 5.2 L4.2 8 L8.2 1.6" stroke="#3a4a9a" stroke-width="1.9" fill="none"/></svg></div>
<div style="left:1165.2px;top:259.28px;width:241.6px;height:32.8px;background:linear-gradient(90deg,#ffff3a 0.0%,#ffff3a 91.0%,#24ba24 91.0%,#24ba24 100.0%);"><div class="t" style="left:10.4px;top:50%;color:#222;">two pair</div><div class="t r" style="right:2.4px;top:50%;color:#222;">0.19%</div></div>
<div style="left:1132px;top:304.16px;width:26.4px;height:26.4px;border:2.4px solid #8e8f8f;background:linear-gradient(135deg,#cdd5de,#eef2f6);"><svg style="position:absolute;left:0.8px;top:0.4px" width="21.6" height="21.6" viewBox="0 0 10 10"><path d="M2 5.2 L4.2 8 L8.2 1.6" stroke="#3a4a9a" stroke-width="1.9" fill="none"/></svg></div>
<div style="left:1165.2px;top:301.36px;width:241.6px;height:32.8px;background:linear-gradient(90deg,#ffff3a 0.0%,#ffff3a 86.0%,#fb3535 86.0%,#fb3535 100.0%);"><div class="t" style="left:10.4px;top:50%;color:#222;">top pair</div><div class="t r" style="right:2.4px;top:50%;color:#222;">0.06%</div></div>
<div style="left:1132px;top:346.24px;width:26.4px;height:26.4px;border:2.4px solid #8e8f8f;background:linear-gradient(135deg,#cdd5de,#eef2f6);"><svg style="position:absolute;left:0.8px;top:0.4px" width="21.6" height="21.6" viewBox="0 0 10 10"><path d="M2 5.2 L4.2 8 L8.2 1.6" stroke="#3a4a9a" stroke-width="1.9" fill="none"/></svg></div>
<div style="left:1165.2px;top:343.44px;width:241.6px;height:32.8px;background:linear-gradient(90deg,#ffff3a 0.0%,#ffff3a 14.0%,#fb3535 14.0%,#fb3535 100.0%);"><div class="t" style="left:10.4px;top:50%;color:#222;">2-nd pair</div><div class="t r" style="right:2.4px;top:50%;color:#222;">0.00%</div></div>
<div style="left:1132px;top:388.32px;width:26.4px;height:26.4px;border:2.4px solid #8e8f8f;background:linear-gradient(135deg,#cdd5de,#eef2f6);"><svg style="position:absolute;left:0.8px;top:0.4px" width="21.6" height="21.6" viewBox="0 0 10 10"><path d="M2 5.2 L4.2 8 L8.2 1.6" stroke="#3a4a9a" stroke-width="1.9" fill="none"/></svg></div>
<div style="left:1165.2px;top:385.52px;width:241.6px;height:32.8px;background:linear-gradient(90deg,#ffff3a 0.0%,#ffff3a 35.0%,#fb3535 35.0%,#fb3535 100.0%);"><div class="t" style="left:10.4px;top:50%;color:#222;">3-rd pair</div><div class="t r" style="right:2.4px;top:50%;color:#222;">0.00%</div></div>
<div style="left:1132px;top:430.4px;width:26.4px;height:26.4px;border:2.4px solid #8e8f8f;background:linear-gradient(135deg,#cdd5de,#eef2f6);"><svg style="position:absolute;left:0.8px;top:0.4px" width="21.6" height="21.6" viewBox="0 0 10 10"><path d="M2 5.2 L4.2 8 L8.2 1.6" stroke="#3a4a9a" stroke-width="1.9" fill="none"/></svg></div>
<div style="left:1165.2px;top:427.6px;width:241.6px;height:32.8px;background:linear-gradient(90deg,#ffff3a 0.0%,#ffff3a 6.0%,#fb3535 6.0%,#fb3535 100.0%);"><div class="t" style="left:10.4px;top:50%;color:#222;">K-high</div><div class="t r" style="right:2.4px;top:50%;color:#222;">0.00%</div></div>
<div style="left:1132px;top:472.48px;width:26.4px;height:26.4px;border:2.4px solid #8e8f8f;background:linear-gradient(135deg,#cdd5de,#eef2f6);"><svg style="position:absolute;left:0.8px;top:0.4px" width="21.6" height="21.6" viewBox="0 0 10 10"><path d="M2 5.2 L4.2 8 L8.2 1.6" stroke="#3a4a9a" stroke-width="1.9" fill="none"/></svg></div>
<div style="left:1165.2px;top:469.68px;width:241.6px;height:32.8px;background:linear-gradient(90deg,#ffff3a 0.0%,#ffff3a 75.0%,#fb3535 75.0%,#fb3535 100.0%);"><div class="t" style="left:10.4px;top:50%;color:#222;">nothing</div><div class="t r" style="right:2.4px;top:50%;color:#222;">0.00%</div></div>
<div class="t" style="left:1131.2px;top:549.6px;">Draws</div>
<div class="btn" style="left:1228.8px;top:530.8px;width:80.8px;height:37.6px;line-height:32.8px;font-size:23.2px;">Check</div>
<div class="btn" style="left:1335.2px;top:530.8px;width:80.8px;height:37.6px;line-height:32.8px;font-size:23.2px;">Empty</div>
<div style="left:1132px;top:598.4px;width:26.4px;height:26.4px;border:2.4px solid #8e8f8f;background:linear-gradient(135deg,#cdd5de,#eef2f6);"><svg style="position:absolute;left:0.8px;top:0.4px" width="21.6" height="21.6" viewBox="0 0 10 10"><path d="M2 5.2 L4.2 8 L8.2 1.6" stroke="#3a4a9a" stroke-width="1.9" fill="none"/></svg></div>
<div style="left:1165.2px;top:595.6px;width:241.6px;height:32.8px;background:linear-gradient(90deg,#ffff3a 0.0%,#ffff3a 100.0%);"><div class="t" style="left:10.4px;top:50%;color:#222;">combo draw</div><div class="t r" style="right:2.4px;top:50%;color:#222;">0.00%</div></div>
<div style="left:1132px;top:640px;width:26.4px;height:26.4px;border:2.4px solid #8e8f8f;background:linear-gradient(135deg,#cdd5de,#eef2f6);"><svg style="position:absolute;left:0.8px;top:0.4px" width="21.6" height="21.6" viewBox="0 0 10 10"><path d="M2 5.2 L4.2 8 L8.2 1.6" stroke="#3a4a9a" stroke-width="1.9" fill="none"/></svg></div>
<div style="left:1165.2px;top:637.2px;width:241.6px;height:32.8px;background:linear-gradient(90deg,#ffff3a 0.0%,#ffff3a 100.0%);"><div class="t" style="left:10.4px;top:50%;color:#222;">flush draw</div><div class="t r" style="right:2.4px;top:50%;color:#222;">0.00%</div></div>
<div style="left:1132px;top:681.6px;width:26.4px;height:26.4px;border:2.4px solid #8e8f8f;background:linear-gradient(135deg,#cdd5de,#eef2f6);"><svg style="position:absolute;left:0.8px;top:0.4px" width="21.6" height="21.6" viewBox="0 0 10 10"><path d="M2 5.2 L4.2 8 L8.2 1.6" stroke="#3a4a9a" stroke-width="1.9" fill="none"/></svg></div>
<div style="left:1165.2px;top:678.8px;width:241.6px;height:32.8px;background:linear-gradient(90deg,#ffff3a 0.0%,#ffff3a 82.0%,#fb3535 82.0%,#fb3535 100.0%);"><div class="t" style="left:10.4px;top:50%;color:#222;">OESD</div><div class="t r" style="right:2.4px;top:50%;color:#222;">0.00%</div></div>
<div style="left:1132px;top:723.2px;width:26.4px;height:26.4px;border:2.4px solid #8e8f8f;background:linear-gradient(135deg,#cdd5de,#eef2f6);"><svg style="position:absolute;left:0.8px;top:0.4px" width="21.6" height="21.6" viewBox="0 0 10 10"><path d="M2 5.2 L4.2 8 L8.2 1.6" stroke="#3a4a9a" stroke-width="1.9" fill="none"/></svg></div>
<div style="left:1165.2px;top:720.4px;width:241.6px;height:32.8px;background:linear-gradient(90deg,#fb3535 0.0%,#fb3535 100.0%);"><div class="t" style="left:10.4px;top:50%;color:#222;">gutshot</div><div class="t r" style="right:2.4px;top:50%;color:#222;">0.00%</div></div>
<div style="left:1132px;top:764.8px;width:26.4px;height:26.4px;border:2.4px solid #8e8f8f;background:linear-gradient(135deg,#cdd5de,#eef2f6);"><svg style="position:absolute;left:0.8px;top:0.4px" width="21.6" height="21.6" viewBox="0 0 10 10"><path d="M2 5.2 L4.2 8 L8.2 1.6" stroke="#3a4a9a" stroke-width="1.9" fill="none"/></svg></div>
<div style="left:1165.2px;top:762px;width:241.6px;height:32.8px;background:linear-gradient(90deg,#ffff3a 0.0%,#ffff3a 47.0%,#fb3535 47.0%,#fb3535 100.0%);"><div class="t" style="left:10.4px;top:50%;color:#222;">no draw</div><div class="t r" style="right:2.4px;top:50%;color:#222;">0.28%</div></div>
<div class="t" style="left:1447.2px;top:171.2px;">Pot</div>
<div class="t r" style="left:1278.4px;width:400px;top:171.2px;">52.80</div>
<div class="t" style="left:1447.2px;top:232px;">Stacks:</div>
<div class="t" style="left:1447.2px;top:297.6px;">Player1</div>
<div class="t r" style="left:1278.4px;width:400px;top:297.6px;">67.90</div>
<div class="t" style="left:1447.2px;top:360.8px;">Player2</div>
<div class="t r" style="left:1278.4px;width:400px;top:360.8px;">94.30</div>
<div class="t" style="left:1447.2px;top:424px;">Player3</div>
<div class="t r" style="left:1278.4px;width:400px;top:424px;">85.50</div>
<div class="t" style="left:1447.2px;top:487.2px;">Nash EVs:</div>
<div class="t" style="left:1447.2px;top:549.6px;">Player1</div>
<div class="t r" style="left:1278.4px;width:400px;top:549.6px;">26.242</div>
<div class="t" style="left:1447.2px;top:612px;">Player2</div>
<div class="t r" style="left:1278.4px;width:400px;top:612px;">-4.808</div>
<div class="t" style="left:1447.2px;top:674.4px;">Player3</div>
<div class="t r" style="left:1278.4px;width:400px;top:674.4px;">-13.434</div>
<div class="btn" style="left:1448px;top:718.4px;width:231.2px;height:39.2px;line-height:34.4px;font-size:23.2px;padding-left:6.4px;text-align:left;background:linear-gradient(#e9f3fa 0%,#dcebf5 48%,#c6dcec 52%,#b9d3e6 100%);border-color:#6f93ad;">None weight<div style="right:7px;top:12px;width:0;height:0;border-left:8.8px solid transparent;border-right:8.8px solid transparent;border-top:10.4px solid #1a1a1a;"></div></div>
<div class="btn" style="left:1448px;top:780px;width:231.2px;height:39.2px;line-height:34.4px;font-size:23.2px;padding-left:6.4px;text-align:left;">Strategy Show<div style="right:7px;top:12px;width:0;height:0;border-left:8.8px solid transparent;border-right:8.8px solid transparent;border-top:10.4px solid #1a1a1a;"></div></div>
<div style="left:1458.4px;top:852px;width:34.4px;height:35.2px;background:#ffff3a;border-right:3.2px solid rgba(0,0,0,.35);border-bottom:3.2px solid rgba(0,0,0,.35);"></div>
<div class="t" style="left:1508.8px;top:867.2px;">Call 8.80</div>
<div style="left:1458.4px;top:914.2px;width:34.4px;height:35.2px;background:#fb3535;border-right:3.2px solid rgba(0,0,0,.35);border-bottom:3.2px solid rgba(0,0,0,.35);"></div>
<div class="t" style="left:1508.8px;top:929.4px;">Fold</div>
<div style="left:1458.4px;top:976.4px;width:34.4px;height:35.2px;background:#24ba24;border-right:3.2px solid rgba(0,0,0,.35);border-bottom:3.2px solid rgba(0,0,0,.35);"></div>
<div class="t" style="left:1508.8px;top:991.6px;">Raise to 26.40</div>
<div style="left:1458.4px;top:1038.6px;width:34.4px;height:35.2px;background:#3cff6e;border-right:3.2px solid rgba(0,0,0,.35);border-bottom:3.2px solid rgba(0,0,0,.35);"></div>
<div class="t" style="left:1508.8px;top:1053.8px;">Raise to 94.30</div>
<div class="pane" style="left:1722.4px;top:150.4px;width:629.6px;height:556.8px;overflow:hidden;">
<div style="left:0px;top:0px;width:589.6px;height:38px;background:linear-gradient(#ffffff,#f7f8fa 60%,#eef0f3);border-bottom:2.4px solid #d5d5d5;"></div>
<div class="t c" style="left:-118.2px;width:480px;top:21.2px;color:#333;">Card</div>
<div style="left:242.4px;top:0px;width:2.4px;height:38px;background:#dcdfe3;"></div>
<div class="t c" style="left:61.8px;width:480px;top:21.2px;color:#333;">Abs.%</div>
<div style="left:358.8px;top:0px;width:2.4px;height:38px;background:#dcdfe3;"></div>
<div class="t c" style="left:177.4px;width:480px;top:21.2px;color:#333;">Played%</div>
<div style="left:473.6px;top:0px;width:2.4px;height:38px;background:#dcdfe3;"></div>
<div class="t c" style="left:292.2px;width:480px;top:21.2px;color:#333;">EV</div>
<div style="left:588.4px;top:0px;width:2.4px;height:38px;background:#dcdfe3;"></div>
<div style="left:0px;top:38px;width:589.6px;height:44.52px;background:#ececec;"></div>
<div style="left:0px;top:81.32px;width:589.6px;height:2.4px;background:#dedede;"></div>
<div class="t" style="left:22.4px;top:66.08px;"><svg style="display:inline-block;vertical-align:-2px;width:18px;height:18px;" viewBox="0 0 10 10"><path d="M5 9.4 C1.5 6.4 0.4 4.8 0.4 3 C0.4 1.5 1.5 0.6 2.7 0.6 C3.7 0.6 4.6 1.2 5 2.2 C5.4 1.2 6.3 0.6 7.3 0.6 C8.5 0.6 9.6 1.5 9.6 3 C9.6 4.8 8.5 6.4 5 9.4 Z" fill="#e01818"/></svg><span class="mono" style="color:#e01818;font-size:24.4px;">A</span> <svg style="display:inline-block;vertical-align:-2px;width:18px;height:18px;" viewBox="0 0 10 10"><path d="M5 0.3 L8.8 5 L5 9.7 L1.2 5 Z" fill="#1c2ee0"/></svg><span class="mono" style="color:#1c2ee0;font-size:24.4px;">T</span></div>
<div class="t r" style="left:-49.6px;width:400px;top:66.08px;">61.29</div>
<div class="t r" style="left:65.2px;width:400px;top:66.08px;">0.00</div>
<div class="t r" style="left:180px;width:400px;top:66.08px;">+4.429</div>
<div style="left:0px;top:125.84px;width:589.6px;height:2.4px;background:#dedede;"></div>
<div class="t" style="left:22.4px;top:110.6px;"><svg style="display:inline-block;vertical-align:-2px;width:18px;height:18px;" viewBox="0 0 10 10"><path d="M5 9.4 C1.5 6.4 0.4 4.8 0.4 3 C0.4 1.5 1.5 0.6 2.7 0.6 C3.7 0.6 4.6 1.2 5 2.2 C5.4 1.2 6.3 0.6 7.3 0.6 C8.5 0.6 9.6 1.5 9.6 3 C9.6 4.8 8.5 6.4 5 9.4 Z" fill="#e01818"/></svg><span class="mono" style="color:#e01818;font-size:24.4px;">A</span> <svg style="display:inline-block;vertical-align:-2px;width:18px;height:18px;" viewBox="0 0 10 10"><path d="M5 0.4 C6 2.4 9.4 4 9.4 6.2 C9.4 7.6 8.4 8.3 7.4 8.3 C6.6 8.3 5.9 7.9 5.5 7.2 C5.6 8.3 6 9 6.8 9.7 L3.2 9.7 C4 9 4.4 8.3 4.5 7.2 C4.1 7.9 3.4 8.3 2.6 8.3 C1.6 8.3 0.6 7.6 0.6 6.2 C0.6 4 4 2.4 5 0.4 Z" fill="#111"/></svg><span class="mono" style="color:#111;font-size:24.4px;">T</span></div>
<div class="t r" style="left:-49.6px;width:400px;top:110.6px;">95.04</div>
<div class="t r" style="left:65.2px;width:400px;top:110.6px;">0.00</div>
<div class="t r" style="left:180px;width:400px;top:110.6px;">+4.162</div>
<div style="left:0px;top:170.36px;width:589.6px;height:2.4px;background:#dedede;"></div>
<div class="t" style="left:22.4px;top:155.12px;"><svg style="display:inline-block;vertical-align:-2px;width:18px;height:18px;" viewBox="0 0 10 10"><path d="M5 9.4 C1.5 6.4 0.4 4.8 0.4 3 C0.4 1.5 1.5 0.6 2.7 0.6 C3.7 0.6 4.6 1.2 5 2.2 C5.4 1.2 6.3 0.6 7.3 0.6 C8.5 0.6 9.6 1.5 9.6 3 C9.6 4.8 8.5 6.4 5 9.4 Z" fill="#e01818"/></svg><span class="mono" style="color:#e01818;font-size:24.4px;">A</span> <svg style="display:inline-block;vertical-align:-2px;width:18px;height:18px;" viewBox="0 0 10 10"><path d="M5 0.4 C6.4 0.4 7.3 1.4 7.3 2.6 C7.3 3.3 7 3.9 6.5 4.3 C6.8 4.2 7.1 4.1 7.4 4.1 C8.7 4.1 9.6 5.1 9.6 6.3 C9.6 7.5 8.7 8.4 7.4 8.4 C6.6 8.4 5.9 8 5.5 7.3 C5.6 8.4 6 9 6.8 9.7 L3.2 9.7 C4 9 4.4 8.4 4.5 7.3 C4.1 8 3.4 8.4 2.6 8.4 C1.3 8.4 0.4 7.5 0.4 6.3 C0.4 5.1 1.3 4.1 2.6 4.1 C2.9 4.1 3.2 4.2 3.5 4.3 C3 3.9 2.7 3.3 2.7 2.6 C2.7 1.4 3.6 0.4 5 0.4 Z" fill="#118a11"/></svg><span class="mono" style="color:#118a11;font-size:24.4px;">T</span></div>
<div class="t r" style="left:-49.6px;width:400px;top:155.12px;">91.79</div>
<div class="t r" style="left:65.2px;width:400px;top:155.12px;">0.00</div>
<div class="t r" style="left:180px;width:400px;top:155.12px;">+4.276</div>
<div style="left:0px;top:214.88px;width:589.6px;height:2.4px;background:#dedede;"></div>
<div class="t" style="left:22.4px;top:199.64px;"><svg style="display:inline-block;vertical-align:-2px;width:18px;height:18px;" viewBox="0 0 10 10"><path d="M5 0.3 L8.8 5 L5 9.7 L1.2 5 Z" fill="#1c2ee0"/></svg><span class="mono" style="color:#1c2ee0;font-size:24.4px;">A</span> <svg style="display:inline-block;vertical-align:-2px;width:18px;height:18px;" viewBox="0 0 10 10"><path d="M5 0.4 C6 2.4 9.4 4 9.4 6.2 C9.4 7.6 8.4 8.3 7.4 8.3 C6.6 8.3 5.9 7.9 5.5 7.2 C5.6 8.3 6 9 6.8 9.7 L3.2 9.7 C4 9 4.4 8.3 4.5 7.2 C4.1 7.9 3.4 8.3 2.6 8.3 C1.6 8.3 0.6 7.6 0.6 6.2 C0.6 4 4 2.4 5 0.4 Z" fill="#111"/></svg><span class="mono" style="color:#111;font-size:24.4px;">T</span></div>
<div class="t r" style="left:-49.6px;width:400px;top:199.64px;">57.69</div>
<div class="t r" style="left:65.2px;width:400px;top:199.64px;">0.00</div>
<div class="t r" style="left:180px;width:400px;top:199.64px;">+4.683</div>
<div style="left:0px;top:259.4px;width:589.6px;height:2.4px;background:#dedede;"></div>
<div class="t" style="left:22.4px;top:244.16px;"><svg style="display:inline-block;vertical-align:-2px;width:18px;height:18px;" viewBox="0 0 10 10"><path d="M5 0.3 L8.8 5 L5 9.7 L1.2 5 Z" fill="#1c2ee0"/></svg><span class="mono" style="color:#1c2ee0;font-size:24.4px;">A</span> <svg style="display:inline-block;vertical-align:-2px;width:18px;height:18px;" viewBox="0 0 10 10"><path d="M5 0.4 C6.4 0.4 7.3 1.4 7.3 2.6 C7.3 3.3 7 3.9 6.5 4.3 C6.8 4.2 7.1 4.1 7.4 4.1 C8.7 4.1 9.6 5.1 9.6 6.3 C9.6 7.5 8.7 8.4 7.4 8.4 C6.6 8.4 5.9 8 5.5 7.3 C5.6 8.4 6 9 6.8 9.7 L3.2 9.7 C4 9 4.4 8.4 4.5 7.3 C4.1 8 3.4 8.4 2.6 8.4 C1.3 8.4 0.4 7.5 0.4 6.3 C0.4 5.1 1.3 4.1 2.6 4.1 C2.9 4.1 3.2 4.2 3.5 4.3 C3 3.9 2.7 3.3 2.7 2.6 C2.7 1.4 3.6 0.4 5 0.4 Z" fill="#118a11"/></svg><span class="mono" style="color:#118a11;font-size:24.4px;">T</span></div>
<div class="t r" style="left:-49.6px;width:400px;top:244.16px;">55.59</div>
<div class="t r" style="left:65.2px;width:400px;top:244.16px;">0.00</div>
<div class="t r" style="left:180px;width:400px;top:244.16px;">+4.751</div>
<div style="left:0px;top:303.92px;width:589.6px;height:2.4px;background:#dedede;"></div>
<div class="t" style="left:22.4px;top:288.68px;"><svg style="display:inline-block;vertical-align:-2px;width:18px;height:18px;" viewBox="0 0 10 10"><path d="M5 0.4 C6 2.4 9.4 4 9.4 6.2 C9.4 7.6 8.4 8.3 7.4 8.3 C6.6 8.3 5.9 7.9 5.5 7.2 C5.6 8.3 6 9 6.8 9.7 L3.2 9.7 C4 9 4.4 8.3 4.5 7.2 C4.1 7.9 3.4 8.3 2.6 8.3 C1.6 8.3 0.6 7.6 0.6 6.2 C0.6 4 4 2.4 5 0.4 Z" fill="#111"/></svg><span class="mono" style="color:#111;font-size:24.4px;">A</span> <svg style="display:inline-block;vertical-align:-2px;width:18px;height:18px;" viewBox="0 0 10 10"><path d="M5 0.3 L8.8 5 L5 9.7 L1.2 5 Z" fill="#1c2ee0"/></svg><span class="mono" style="color:#1c2ee0;font-size:24.4px;">T</span></div>
<div class="t r" style="left:-49.6px;width:400px;top:288.68px;">80.96</div>
<div class="t r" style="left:65.2px;width:400px;top:288.68px;">0.00</div>
<div class="t r" style="left:180px;width:400px;top:288.68px;">+4.533</div>
<div style="left:0px;top:348.44px;width:589.6px;height:2.4px;background:#dedede;"></div>
<div class="t" style="left:22.4px;top:333.2px;"><svg style="display:inline-block;vertical-align:-2px;width:18px;height:18px;" viewBox="0 0 10 10"><path d="M5 0.4 C6 2.4 9.4 4 9.4 6.2 C9.4 7.6 8.4 8.3 7.4 8.3 C6.6 8.3 5.9 7.9 5.5 7.2 C5.6 8.3 6 9 6.8 9.7 L3.2 9.7 C4 9 4.4 8.3 4.5 7.2 C4.1 7.9 3.4 8.3 2.6 8.3 C1.6 8.3 0.6 7.6 0.6 6.2 C0.6 4 4 2.4 5 0.4 Z" fill="#111"/></svg><span class="mono" style="color:#111;font-size:24.4px;">A</span> <svg style="display:inline-block;vertical-align:-2px;width:18px;height:18px;" viewBox="0 0 10 10"><path d="M5 0.4 C6.4 0.4 7.3 1.4 7.3 2.6 C7.3 3.3 7 3.9 6.5 4.3 C6.8 4.2 7.1 4.1 7.4 4.1 C8.7 4.1 9.6 5.1 9.6 6.3 C9.6 7.5 8.7 8.4 7.4 8.4 C6.6 8.4 5.9 8 5.5 7.3 C5.6 8.4 6 9 6.8 9.7 L3.2 9.7 C4 9 4.4 8.4 4.5 7.3 C4.1 8 3.4 8.4 2.6 8.4 C1.3 8.4 0.4 7.5 0.4 6.3 C0.4 5.1 1.3 4.1 2.6 4.1 C2.9 4.1 3.2 4.2 3.5 4.3 C3 3.9 2.7 3.3 2.7 2.6 C2.7 1.4 3.6 0.4 5 0.4 Z" fill="#118a11"/></svg><span class="mono" style="color:#118a11;font-size:24.4px;">T</span></div>
<div class="t r" style="left:-49.6px;width:400px;top:333.2px;">93.58</div>
<div class="t r" style="left:65.2px;width:400px;top:333.2px;">0.00</div>
<div class="t r" style="left:180px;width:400px;top:333.2px;">+4.415</div>
<div style="left:0px;top:392.96px;width:589.6px;height:2.4px;background:#dedede;"></div>
<div class="t" style="left:22.4px;top:377.72px;"><svg style="display:inline-block;vertical-align:-2px;width:18px;height:18px;" viewBox="0 0 10 10"><path d="M5 0.4 C6.4 0.4 7.3 1.4 7.3 2.6 C7.3 3.3 7 3.9 6.5 4.3 C6.8 4.2 7.1 4.1 7.4 4.1 C8.7 4.1 9.6 5.1 9.6 6.3 C9.6 7.5 8.7 8.4 7.4 8.4 C6.6 8.4 5.9 8 5.5 7.3 C5.6 8.4 6 9 6.8 9.7 L3.2 9.7 C4 9 4.4 8.4 4.5 7.3 C4.1 8 3.4 8.4 2.6 8.4 C1.3 8.4 0.4 7.5 0.4 6.3 C0.4 5.1 1.3 4.1 2.6 4.1 C2.9 4.1 3.2 4.2 3.5 4.3 C3 3.9 2.7 3.3 2.7 2.6 C2.7 1.4 3.6 0.4 5 0.4 Z" fill="#118a11"/></svg><span class="mono" style="color:#118a11;font-size:24.4px;">A</span> <svg style="display:inline-block;vertical-align:-2px;width:18px;height:18px;" viewBox="0 0 10 10"><path d="M5 0.3 L8.8 5 L5 9.7 L1.2 5 Z" fill="#1c2ee0"/></svg><span class="mono" style="color:#1c2ee0;font-size:24.4px;">T</span></div>
<div class="t r" style="left:-49.6px;width:400px;top:377.72px;">69.44</div>
<div class="t r" style="left:65.2px;width:400px;top:377.72px;">0.00</div>
<div class="t r" style="left:180px;width:400px;top:377.72px;">+4.454</div>
<div style="left:0px;top:437.48px;width:589.6px;height:2.4px;background:#dedede;"></div>
<div class="t" style="left:22.4px;top:422.24px;"><svg style="display:inline-block;vertical-align:-2px;width:18px;height:18px;" viewBox="0 0 10 10"><path d="M5 0.4 C6.4 0.4 7.3 1.4 7.3 2.6 C7.3 3.3 7 3.9 6.5 4.3 C6.8 4.2 7.1 4.1 7.4 4.1 C8.7 4.1 9.6 5.1 9.6 6.3 C9.6 7.5 8.7 8.4 7.4 8.4 C6.6 8.4 5.9 8 5.5 7.3 C5.6 8.4 6 9 6.8 9.7 L3.2 9.7 C4 9 4.4 8.4 4.5 7.3 C4.1 8 3.4 8.4 2.6 8.4 C1.3 8.4 0.4 7.5 0.4 6.3 C0.4 5.1 1.3 4.1 2.6 4.1 C2.9 4.1 3.2 4.2 3.5 4.3 C3 3.9 2.7 3.3 2.7 2.6 C2.7 1.4 3.6 0.4 5 0.4 Z" fill="#118a11"/></svg><span class="mono" style="color:#118a11;font-size:24.4px;">A</span> <svg style="display:inline-block;vertical-align:-2px;width:18px;height:18px;" viewBox="0 0 10 10"><path d="M5 0.4 C6 2.4 9.4 4 9.4 6.2 C9.4 7.6 8.4 8.3 7.4 8.3 C6.6 8.3 5.9 7.9 5.5 7.2 C5.6 8.3 6 9 6.8 9.7 L3.2 9.7 C4 9 4.4 8.3 4.5 7.2 C4.1 7.9 3.4 8.3 2.6 8.3 C1.6 8.3 0.6 7.6 0.6 6.2 C0.6 4 4 2.4 5 0.4 Z" fill="#111"/></svg><span class="mono" style="color:#111;font-size:24.4px;">T</span></div>
<div class="t r" style="left:-49.6px;width:400px;top:422.24px;">92.70</div>
<div class="t r" style="left:65.2px;width:400px;top:422.24px;">0.00</div>
<div class="t r" style="left:180px;width:400px;top:422.24px;">+4.323</div>
<div style="left:0px;top:482px;width:589.6px;height:2.4px;background:#dedede;"></div>
<div class="t" style="left:22.4px;top:466.76px;"><svg style="display:inline-block;vertical-align:-2px;width:18px;height:18px;" viewBox="0 0 10 10"><path d="M5 9.4 C1.5 6.4 0.4 4.8 0.4 3 C0.4 1.5 1.5 0.6 2.7 0.6 C3.7 0.6 4.6 1.2 5 2.2 C5.4 1.2 6.3 0.6 7.3 0.6 C8.5 0.6 9.6 1.5 9.6 3 C9.6 4.8 8.5 6.4 5 9.4 Z" fill="#e01818"/></svg><span class="mono" style="color:#e01818;font-size:24.4px;">A</span> <svg style="display:inline-block;vertical-align:-2px;width:18px;height:18px;" viewBox="0 0 10 10"><path d="M5 0.4 C6 2.4 9.4 4 9.4 6.2 C9.4 7.6 8.4 8.3 7.4 8.3 C6.6 8.3 5.9 7.9 5.5 7.2 C5.6 8.3 6 9 6.8 9.7 L3.2 9.7 C4 9 4.4 8.3 4.5 7.2 C4.1 7.9 3.4 8.3 2.6 8.3 C1.6 8.3 0.6 7.6 0.6 6.2 C0.6 4 4 2.4 5 0.4 Z" fill="#111"/></svg><span class="mono" style="color:#111;font-size:24.4px;">9</span></div>
<div class="t r" style="left:-49.6px;width:400px;top:466.76px;">96.95</div>
<div class="t r" style="left:65.2px;width:400px;top:466.76px;">0.00</div>
<div class="t r" style="left:180px;width:400px;top:466.76px;">-3.736</div>
<div style="left:0px;top:526.52px;width:589.6px;height:2.4px;background:#dedede;"></div>
<div class="t" style="left:22.4px;top:511.28px;"><svg style="display:inline-block;vertical-align:-2px;width:18px;height:18px;" viewBox="0 0 10 10"><path d="M5 9.4 C1.5 6.4 0.4 4.8 0.4 3 C0.4 1.5 1.5 0.6 2.7 0.6 C3.7 0.6 4.6 1.2 5 2.2 C5.4 1.2 6.3 0.6 7.3 0.6 C8.5 0.6 9.6 1.5 9.6 3 C9.6 4.8 8.5 6.4 5 9.4 Z" fill="#e01818"/></svg><span class="mono" style="color:#e01818;font-size:24.4px;">A</span> <svg style="display:inline-block;vertical-align:-2px;width:18px;height:18px;" viewBox="0 0 10 10"><path d="M5 0.4 C6.4 0.4 7.3 1.4 7.3 2.6 C7.3 3.3 7 3.9 6.5 4.3 C6.8 4.2 7.1 4.1 7.4 4.1 C8.7 4.1 9.6 5.1 9.6 6.3 C9.6 7.5 8.7 8.4 7.4 8.4 C6.6 8.4 5.9 8 5.5 7.3 C5.6 8.4 6 9 6.8 9.7 L3.2 9.7 C4 9 4.4 8.4 4.5 7.3 C4.1 8 3.4 8.4 2.6 8.4 C1.3 8.4 0.4 7.5 0.4 6.3 C0.4 5.1 1.3 4.1 2.6 4.1 C2.9 4.1 3.2 4.2 3.5 4.3 C3 3.9 2.7 3.3 2.7 2.6 C2.7 1.4 3.6 0.4 5 0.4 Z" fill="#118a11"/></svg><span class="mono" style="color:#118a11;font-size:24.4px;">9</span></div>
<div class="t r" style="left:-49.6px;width:400px;top:511.28px;">83.45</div>
<div class="t r" style="left:65.2px;width:400px;top:511.28px;">0.00</div>
<div class="t r" style="left:180px;width:400px;top:511.28px;">-3.825</div>
<div style="left:0px;top:571.04px;width:589.6px;height:2.4px;background:#dedede;"></div>
<div class="t" style="left:22.4px;top:555.76px;"><svg style="display:inline-block;vertical-align:-2px;width:18px;height:18px;" viewBox="0 0 10 10"><path d="M5 0.3 L8.8 5 L5 9.7 L1.2 5 Z" fill="#1c2ee0"/></svg><span class="mono" style="color:#1c2ee0;font-size:24.4px;">A</span> <svg style="display:inline-block;vertical-align:-2px;width:18px;height:18px;" viewBox="0 0 10 10"><path d="M5 9.4 C1.5 6.4 0.4 4.8 0.4 3 C0.4 1.5 1.5 0.6 2.7 0.6 C3.7 0.6 4.6 1.2 5 2.2 C5.4 1.2 6.3 0.6 7.3 0.6 C8.5 0.6 9.6 1.5 9.6 3 C9.6 4.8 8.5 6.4 5 9.4 Z" fill="#e01818"/></svg><span class="mono" style="color:#e01818;font-size:24.4px;">9</span></div>
<div class="t r" style="left:-49.6px;width:400px;top:555.76px;">100.00</div>
<div class="t r" style="left:65.2px;width:400px;top:555.76px;">0.00</div>
<div class="t r" style="left:180px;width:400px;top:555.76px;">-3.667</div>
<div style="left:242.4px;top:38px;width:2.4px;height:534.24px;background:#dcdcdc;"></div>
<div style="left:358.8px;top:38px;width:2.4px;height:534.24px;background:#dcdcdc;"></div>
<div style="left:473.6px;top:38px;width:2.4px;height:534.24px;background:#dcdcdc;"></div>
<div style="left:588.4px;top:38px;width:2.4px;height:534.24px;background:#dcdcdc;"></div>
<div style="left:589.6px;top:0px;width:35.2px;height:556.8px;background:#f1f1f1;border-left:2px solid #e2e2e2;"></div>
<div style="left:600px;top:14.4px;width:16px;height:12px;"><svg width="16" height="12" viewBox="0 0 8 6"><path d="M0 6 L4 0 L8 6 Z" fill="#444"/></svg></div>
<div style="left:600px;top:524px;width:16px;height:12px;"><svg width="16" height="12" viewBox="0 0 8 6"><path d="M0 0 L4 6 L8 0 Z" fill="#444"/></svg></div>
<div style="left:592.8px;top:36px;width:28.8px;height:36.8px;border:2.4px solid #9a9a9a;border-radius:4px;background:linear-gradient(90deg,#f4f4f4,#dcdcdc);"></div>
</div>
<div class="pane" style="left:1722.4px;top:739.2px;width:629.6px;height:351.2px;overflow:hidden;">
<div style="left:0px;top:0px;width:589.6px;height:38px;background:linear-gradient(#ffffff,#f7f8fa 60%,#eef0f3);border-bottom:2.4px solid #d5d5d5;"></div>
<div class="t c" style="left:-118.2px;width:480px;top:21.2px;color:#333;">Action</div>
<div style="left:242.4px;top:0px;width:2.4px;height:38px;background:#dcdfe3;"></div>
<div class="t c" style="left:61.8px;width:480px;top:21.2px;color:#333;">Abs.%</div>
<div style="left:358.8px;top:0px;width:2.4px;height:38px;background:#dcdfe3;"></div>
<div class="t c" style="left:177.4px;width:480px;top:21.2px;color:#333;">Played%</div>
<div style="left:473.6px;top:0px;width:2.4px;height:38px;background:#dcdfe3;"></div>
<div class="t c" style="left:292.2px;width:480px;top:21.2px;color:#333;">EV</div>
<div style="left:588.4px;top:0px;width:2.4px;height:38px;background:#dcdfe3;"></div>
<div style="left:0px;top:81.32px;width:589.6px;height:2.4px;background:#dedede;"></div>
<div class="t" style="left:3.6px;top:66.08px;">Player1 Call 8.80</div>
<div class="t r" style="left:-49.6px;width:400px;top:66.08px;">61.29</div>
<div class="t r" style="left:65.2px;width:400px;top:66.08px;">100.00</div>
<div class="t r" style="left:180px;width:400px;top:66.08px;color:#1d8a2a;">+6.756</div>
<div style="left:0px;top:125.84px;width:589.6px;height:2.4px;background:#dedede;"></div>
<div class="t" style="left:3.6px;top:110.6px;">Player1 Fold</div>
<div class="t r" style="left:-49.6px;width:400px;top:110.6px;">61.29</div>
<div class="t r" style="left:65.2px;width:400px;top:110.6px;">0.00</div>
<div class="t r" style="left:180px;width:400px;top:110.6px;color:#1d8a2a;">+0.000</div>
<div style="left:0px;top:170.36px;width:589.6px;height:2.4px;background:#dedede;"></div>
<div class="t" style="left:3.6px;top:155.12px;">Player1 Raise to 26.40</div>
<div class="t r" style="left:-49.6px;width:400px;top:155.12px;">61.29</div>
<div class="t r" style="left:65.2px;width:400px;top:155.12px;">0.00</div>
<div class="t r" style="left:180px;width:400px;top:155.12px;color:#1d8a2a;">+4.429</div>
<div style="left:0px;top:214.88px;width:589.6px;height:2.4px;background:#dedede;"></div>
<div class="t" style="left:3.6px;top:199.64px;">Player1 Raise to 94.30</div>
<div class="t r" style="left:-49.6px;width:400px;top:199.64px;">61.29</div>
<div class="t r" style="left:65.2px;width:400px;top:199.64px;">0.00</div>
<div class="t r" style="left:180px;width:400px;top:199.64px;color:#1d8a2a;">+0.330</div>
<div style="left:242.4px;top:38px;width:2.4px;height:178.08px;background:#dcdcdc;"></div>
<div style="left:358.8px;top:38px;width:2.4px;height:178.08px;background:#dcdcdc;"></div>
<div style="left:473.6px;top:38px;width:2.4px;height:178.08px;background:#dcdcdc;"></div>
<div style="left:588.4px;top:38px;width:2.4px;height:178.08px;background:#dcdcdc;"></div>
<div style="left:589.6px;top:0px;width:35.2px;height:351.2px;background:#f1f1f1;border-left:2px solid #e2e2e2;"></div>
<div style="left:600px;top:14.4px;width:16px;height:12px;"><svg width="16" height="12" viewBox="0 0 8 6"><path d="M0 6 L4 0 L8 6 Z" fill="#444"/></svg></div>
<div style="left:600px;top:318.4px;width:16px;height:12px;"><svg width="16" height="12" viewBox="0 0 8 6"><path d="M0 0 L4 6 L8 0 Z" fill="#444"/></svg></div>
</div>
<div style="left:58.4px;top:1150.4px;width:89.6px;height:128.8px;background:linear-gradient(#9a0000,#6a0000 55%,#440000);border:3.6px solid #f41c1c;"><div class="t mono" style="left:2.4px;top:14.4px;font-size:22.4px;color:#f0f0f0;text-shadow:none;">T</div><div style="left:8.8px;top:42.4px;width:15.2px;height:15.2px;"><svg style="display:block;width:15.2px;height:15.2px;" viewBox="0 0 10 10"><path d="M5 9.4 C1.5 6.4 0.4 4.8 0.4 3 C0.4 1.5 1.5 0.6 2.7 0.6 C3.7 0.6 4.6 1.2 5 2.2 C5.4 1.2 6.3 0.6 7.3 0.6 C8.5 0.6 9.6 1.5 9.6 3 C9.6 4.8 8.5 6.4 5 9.4 Z" fill="#fff"/></svg></div><div class="t c" style="left:21.2px;width:40px;top:61.2px;font-size:39.2px;color:#f2f2f2;text-shadow:none;font-family:'Liberation Serif',serif;">T</div></div>
<div style="left:163.6px;top:1150.4px;width:89.6px;height:128.8px;background:linear-gradient(#0c0c9c,#000068 55%,#000048);border:3.6px solid #a01414;"><div class="t mono" style="left:2.4px;top:14.4px;font-size:22.4px;color:#f0f0f0;text-shadow:none;">9</div><div style="left:8.8px;top:42.4px;width:15.2px;height:15.2px;"><svg style="display:block;width:15.2px;height:15.2px;" viewBox="0 0 10 10"><path d="M5 0.3 L8.8 5 L5 9.7 L1.2 5 Z" fill="#fff"/></svg></div><div class="t c" style="left:21.2px;width:40px;top:61.2px;font-size:39.2px;color:#f2f2f2;text-shadow:none;font-family:'Liberation Serif',serif;">9</div></div>
<div style="left:268.8px;top:1150.4px;width:89.6px;height:128.8px;background:linear-gradient(#909090,#646464 55%,#404040);border:3.6px solid #e82222;"><div class="t mono" style="left:2.4px;top:14.4px;font-size:22.4px;color:#f0f0f0;text-shadow:none;">5</div><div style="left:8.8px;top:42.4px;width:15.2px;height:15.2px;"><svg style="display:block;width:15.2px;height:15.2px;" viewBox="0 0 10 10"><path d="M5 0.4 C6 2.4 9.4 4 9.4 6.2 C9.4 7.6 8.4 8.3 7.4 8.3 C6.6 8.3 5.9 7.9 5.5 7.2 C5.6 8.3 6 9 6.8 9.7 L3.2 9.7 C4 9 4.4 8.3 4.5 7.2 C4.1 7.9 3.4 8.3 2.6 8.3 C1.6 8.3 0.6 7.6 0.6 6.2 C0.6 4 4 2.4 5 0.4 Z" fill="#fff"/></svg></div><div class="t c" style="left:21.2px;width:40px;top:61.2px;font-size:39.2px;color:#f2f2f2;text-shadow:none;font-family:'Liberation Serif',serif;">5</div></div>
<div style="left:374.4px;top:1150.4px;width:89.6px;height:128.8px;background:linear-gradient(#0c0c9c,#000068 55%,#000048);border:3.6px solid #24dc24;"><div class="t mono" style="left:2.4px;top:14.4px;font-size:22.4px;color:#f0f0f0;text-shadow:none;">3</div><div style="left:8.8px;top:42.4px;width:15.2px;height:15.2px;"><svg style="display:block;width:15.2px;height:15.2px;" viewBox="0 0 10 10"><path d="M5 0.3 L8.8 5 L5 9.7 L1.2 5 Z" fill="#fff"/></svg></div><div class="t c" style="left:21.2px;width:40px;top:61.2px;font-size:39.2px;color:#f2f2f2;text-shadow:none;font-family:'Liberation Serif',serif;">3</div></div>
<div style="left:480px;top:1150.4px;width:89.6px;height:128.8px;background:linear-gradient(#008c00,#006000 55%,#003c00);border:3.6px solid #0c640c;"><div class="t mono" style="left:2.4px;top:14.4px;font-size:22.4px;color:#f0f0f0;text-shadow:none;">A</div><div style="left:8.8px;top:42.4px;width:15.2px;height:15.2px;"><svg style="display:block;width:15.2px;height:15.2px;" viewBox="0 0 10 10"><path d="M5 0.4 C6.4 0.4 7.3 1.4 7.3 2.6 C7.3 3.3 7 3.9 6.5 4.3 C6.8 4.2 7.1 4.1 7.4 4.1 C8.7 4.1 9.6 5.1 9.6 6.3 C9.6 7.5 8.7 8.4 7.4 8.4 C6.6 8.4 5.9 8 5.5 7.3 C5.6 8.4 6 9 6.8 9.7 L3.2 9.7 C4 9 4.4 8.4 4.5 7.3 C4.1 8 3.4 8.4 2.6 8.4 C1.3 8.4 0.4 7.5 0.4 6.3 C0.4 5.1 1.3 4.1 2.6 4.1 C2.9 4.1 3.2 4.2 3.5 4.3 C3 3.9 2.7 3.3 2.7 2.6 C2.7 1.4 3.6 0.4 5 0.4 Z" fill="#fff"/></svg></div><div class="t c" style="left:21.2px;width:40px;top:61.2px;font-size:39.2px;color:#f2f2f2;text-shadow:none;font-family:'Liberation Serif',serif;">A</div></div>
<div class="btn" style="left:588px;top:1155.2px;width:246.4px;height:37.2px;line-height:32.4px;font-size:23.2px;">Stacks of Players</div>
<div class="t" style="left:858.4px;top:1174.4px;">Main Pot</div>
<div style="left:964px;top:1155.2px;width:126.8px;height:37.2px;background:#f4f4f4;border:2.4px solid #bcbcbc;"><div class="t c dis" style="left:0;width:100%;top:50%;">8.00</div></div>
<div class="t" style="left:584.8px;top:1237.6px;">Street</div>
<div style="left:710.8px;top:1226.4px;width:24.8px;height:24.8px;border-radius:50%;border:2.4px solid #b4b4b4;background:#f6f6f6;"><div style="left:5.2px;top:5.2px;width:9.6px;height:9.6px;border-radius:50%;background:#9a9a9a;"></div></div>
<div class="t" style="left:751.2px;top:1238.8px;color:#a0a0a0;">Flop</div>
<div style="left:847.6px;top:1226.4px;width:24.8px;height:24.8px;border-radius:50%;border:2.4px solid #b4b4b4;background:#f6f6f6;"></div>
<div class="t" style="left:887.2px;top:1238.8px;color:#a0a0a0;">Turn</div>
<div style="left:986px;top:1226.4px;width:24.8px;height:24.8px;border-radius:50%;border:2.4px solid #b4b4b4;background:#f6f6f6;"></div>
<div class="t" style="left:1024.8px;top:1238.8px;color:#a0a0a0;">River</div>
<div class="t" style="left:1131.6px;top:1174.4px;">Player 1 bet sizing:</div>
<div class="btn" style="left:1365.6px;top:1156px;width:250px;height:37.2px;line-height:32.4px;font-size:23.2px;padding-right:34.4px;">utg-3way-srp<div style="right:32px;top:4.8px;width:2px;height:23.6px;background:rgba(0,0,0,.22);"></div><div style="right:7.2px;top:11px;width:0;height:0;border-left:8.8px solid transparent;border-right:8.8px solid transparent;border-top:10.4px solid #1a1a1a;"></div></div>
<div class="t" style="left:1131.6px;top:1238.2px;">Player 2 bet sizing</div>
<div class="btn" style="left:1365.6px;top:1219.8px;width:250px;height:37.2px;line-height:32.4px;font-size:23.2px;padding-right:34.4px;">utg-3way-srp<div style="right:32px;top:4.8px;width:2px;height:23.6px;background:rgba(0,0,0,.22);"></div><div style="right:7.2px;top:11px;width:0;height:0;border-left:8.8px solid transparent;border-right:8.8px solid transparent;border-top:10.4px solid #1a1a1a;"></div></div>
<div class="t" style="left:1131.6px;top:1302px;">Player 3 bet sizing</div>
<div class="btn" style="left:1365.6px;top:1283.6px;width:250px;height:37.2px;line-height:32.4px;font-size:23.2px;padding-right:34.4px;">btn-3way-srp<div style="right:32px;top:4.8px;width:2px;height:23.6px;background:rgba(0,0,0,.22);"></div><div style="right:7.2px;top:11px;width:0;height:0;border-left:8.8px solid transparent;border-right:8.8px solid transparent;border-top:10.4px solid #1a1a1a;"></div></div>
<div class="btn" style="left:1639.2px;top:1155.2px;width:205.6px;height:37.2px;line-height:32.4px;font-size:23.2px;padding-right:28px;">Save Tree<div style="right:25.6px;top:4.8px;width:2px;height:23.6px;background:rgba(0,0,0,.22);"></div><div style="right:4px;top:11px;width:0;height:0;border-left:8.8px solid transparent;border-right:8.8px solid transparent;border-top:10.4px solid #1a1a1a;"></div></div>
<div class="btn dis" style="left:1871.2px;top:1155.2px;width:122px;height:37.2px;line-height:32.4px;font-size:23.2px;padding-left:6.4px;text-align:left;">Cash<div style="right:7px;top:11px;width:0;height:0;border-left:8.8px solid transparent;border-right:8.8px solid transparent;border-top:10.4px solid #b4b4b4;"></div></div>
<div class="btn dis" style="left:2018px;top:1155.2px;width:142.4px;height:37.2px;line-height:32.4px;font-size:23.2px;">Stacks</div>
<div class="btn" style="left:1639.2px;top:1218.4px;width:205.6px;height:37.2px;line-height:32.4px;font-size:23.2px;">Clear Situation</div>
<div class="t" style="left:1866.4px;top:1237.2px;">Who is OOP:</div>
<div class="btn dis" style="left:2018px;top:1218.4px;width:142.4px;height:37.2px;line-height:32.4px;font-size:23.2px;padding-left:6.4px;text-align:left;">Player 1<div style="right:7px;top:11px;width:0;height:0;border-left:8.8px solid transparent;border-right:8.8px solid transparent;border-top:10.4px solid #b4b4b4;"></div></div>
<div class="t" style="left:60px;top:1406px;">Range Player1</div>
<div class="btn" style="left:315.2px;top:1386.4px;width:163.6px;height:37.6px;line-height:32.8px;font-size:23.2px;padding-right:32.8px;">43.19%<div style="right:30.4px;top:4.8px;width:2px;height:24px;background:rgba(0,0,0,.22);"></div><div style="right:6.4px;top:11.2px;width:0;height:0;border-left:8.8px solid transparent;border-right:8.8px solid transparent;border-top:10.4px solid #1a1a1a;"></div></div>
<div class="t" style="left:60px;top:1469.8px;">Range Player2</div>
<div class="btn" style="left:315.2px;top:1450.2px;width:163.6px;height:37.6px;line-height:32.8px;font-size:23.2px;padding-right:32.8px;">28.42%<div style="right:30.4px;top:4.8px;width:2px;height:24px;background:rgba(0,0,0,.22);"></div><div style="right:6.4px;top:11.2px;width:0;height:0;border-left:8.8px solid transparent;border-right:8.8px solid transparent;border-top:10.4px solid #1a1a1a;"></div></div>
<div class="t" style="left:60px;top:1533.6px;">Range Player3</div>
<div class="btn" style="left:315.2px;top:1514px;width:163.6px;height:37.6px;line-height:32.8px;font-size:23.2px;padding-right:32.8px;">8.82%<div style="right:30.4px;top:4.8px;width:2px;height:24px;background:rgba(0,0,0,.22);"></div><div style="right:6.4px;top:11.2px;width:0;height:0;border-left:8.8px solid transparent;border-right:8.8px solid transparent;border-top:10.4px solid #1a1a1a;"></div></div>
<div class="btn" style="left:503.2px;top:1386.4px;width:291.2px;height:37.6px;line-height:32.8px;font-size:23.2px;">Calculate Flop</div>
<div class="btn" style="left:503.2px;top:1450.2px;width:291.2px;height:37.6px;line-height:32.8px;font-size:23.2px;">Add Job</div>
<div class="t" style="left:835.2px;top:1406px;">Range Player1</div>
<div class="btn" style="left:1089.6px;top:1386.4px;width:166.8px;height:37.6px;line-height:32.8px;font-size:23.2px;padding-right:32.8px;">18.14%<div style="right:30.4px;top:4.8px;width:2px;height:24px;background:rgba(0,0,0,.22);"></div><div style="right:6.4px;top:11.2px;width:0;height:0;border-left:8.8px solid transparent;border-right:8.8px solid transparent;border-top:10.4px solid #1a1a1a;"></div></div>
<div class="t" style="left:835.2px;top:1469.8px;">Range Player2</div>
<div class="btn" style="left:1089.6px;top:1450.2px;width:166.8px;height:37.6px;line-height:32.8px;font-size:23.2px;padding-right:32.8px;">5.17%<div style="right:30.4px;top:4.8px;width:2px;height:24px;background:rgba(0,0,0,.22);"></div><div style="right:6.4px;top:11.2px;width:0;height:0;border-left:8.8px solid transparent;border-right:8.8px solid transparent;border-top:10.4px solid #1a1a1a;"></div></div>
<div class="t" style="left:835.2px;top:1533.6px;">Range Player3</div>
<div class="btn" style="left:1089.6px;top:1514px;width:166.8px;height:37.6px;line-height:32.8px;font-size:23.2px;padding-right:32.8px;">4.93%<div style="right:30.4px;top:4.8px;width:2px;height:24px;background:rgba(0,0,0,.22);"></div><div style="right:6.4px;top:11.2px;width:0;height:0;border-left:8.8px solid transparent;border-right:8.8px solid transparent;border-top:10.4px solid #1a1a1a;"></div></div>
<div class="btn" style="left:1281.2px;top:1386.4px;width:292.8px;height:37.6px;line-height:32.8px;font-size:23.2px;padding-right:31.2px;">Calculate Turn<div style="right:5.6px;top:11.2px;width:0;height:0;border-left:8.8px solid transparent;border-right:8.8px solid transparent;border-top:10.4px solid #1a1a1a;"></div></div>
<div class="btn" style="left:1281.2px;top:1450.2px;width:124px;height:37.6px;line-height:32.8px;font-size:23.2px;padding-right:28px;">Runouts<div style="right:4px;top:11.2px;width:0;height:0;border-left:8.8px solid transparent;border-right:8.8px solid transparent;border-top:10.4px solid #1a1a1a;"></div></div>
<div class="t" style="left:1615.2px;top:1406px;color:#a4a4a4;text-shadow:none;">Range Player1</div>
<div class="btn dis" style="left:1868.8px;top:1386.4px;width:166.8px;height:37.6px;line-height:32.8px;font-size:23.2px;padding-right:32.8px;">0.00%<div style="right:6.4px;top:11.2px;width:0;height:0;border-left:8.8px solid transparent;border-right:8.8px solid transparent;border-top:10.4px solid #b4b4b4;"></div></div>
<div class="t" style="left:1615.2px;top:1469.8px;color:#a4a4a4;text-shadow:none;">Range Player2</div>
<div class="btn dis" style="left:1868.8px;top:1450.2px;width:166.8px;height:37.6px;line-height:32.8px;font-size:23.2px;padding-right:32.8px;">0.00%<div style="right:6.4px;top:11.2px;width:0;height:0;border-left:8.8px solid transparent;border-right:8.8px solid transparent;border-top:10.4px solid #b4b4b4;"></div></div>
<div class="t" style="left:1615.2px;top:1533.6px;color:#a4a4a4;text-shadow:none;">Range Player3</div>
<div class="btn dis" style="left:1868.8px;top:1514px;width:166.8px;height:37.6px;line-height:32.8px;font-size:23.2px;padding-right:32.8px;">0.00%<div style="right:6.4px;top:11.2px;width:0;height:0;border-left:8.8px solid transparent;border-right:8.8px solid transparent;border-top:10.4px solid #b4b4b4;"></div></div>
<div class="btn dis" style="left:2060.8px;top:1386.4px;width:289.6px;height:37.6px;line-height:32.8px;font-size:23.2px;">Calculate River</div>
<div class="btn dis" style="left:2060.8px;top:1450.2px;width:124px;height:37.6px;line-height:32.8px;font-size:23.2px;padding-right:28px;">Runouts<div style="right:4px;top:11.2px;width:0;height:0;border-left:8.8px solid transparent;border-right:8.8px solid transparent;border-top:10.4px solid #b4b4b4;"></div></div>
<div class="pane" style="left:62.4px;top:1574.8px;width:733.6px;height:498.4px;background:#fff;overflow:hidden;">
<div style="left:0px;top:0px;width:733.6px;height:36.8px;background:linear-gradient(#ffffff,#f6f7f9 70%,#eceef1);"></div>
<div class="t" style="left:7.2px;top:20px;color:#222;">Flop Actions</div>
<svg style="position:absolute;left:16.8px;top:50.4px" width="14.4" height="14.4" viewBox="0 0 6 6"><path d="M6 0 L6 6 L0 6 Z" fill="#333"/></svg>
<div class="t" style="left:45.6px;top:58px;">Flop Th 9d 5s - Nash Dist. 0.278</div>
<svg style="position:absolute;left:58.68px;top:81.84px" width="14.4" height="14.4" viewBox="0 0 6 6"><path d="M6 0 L6 6 L0 6 Z" fill="#333"/></svg>
<div class="t" style="left:87.48px;top:89.44px;">Player1 Check - 99.66%</div>
<svg style="position:absolute;left:100.56px;top:113.28px" width="14.4" height="14.4" viewBox="0 0 6 6"><path d="M6 0 L6 6 L0 6 Z" fill="#333"/></svg>
<div class="t" style="left:129.36px;top:120.88px;">Player2 Check - 68.68%</div>
<div class="t" style="left:171.24px;top:152.32px;">Player3 Check - 45.36%</div>
<svg style="position:absolute;left:142.44px;top:176.16px" width="14.4" height="14.4" viewBox="0 0 6 6"><path d="M6 0 L6 6 L0 6 Z" fill="#333"/></svg>
<div class="t" style="left:171.24px;top:183.76px;">Player3 Bet 3.20 - 54.64%</div>
<svg style="position:absolute;left:184.32px;top:207.6px" width="14.4" height="14.4" viewBox="0 0 6 6"><path d="M6 0 L6 6 L0 6 Z" fill="#333"/></svg>
<div class="t" style="left:213.12px;top:215.2px;">Player1 Call 3.20 - 41.36%</div>
<div style="left:250.2px;top:231.84px;width:478.6px;height:31.2px;background:#ececec;"></div>
<div class="t" style="left:255px;top:246.64px;">Player2 Call 3.20 - 25.28%</div>
<div class="t" style="left:255px;top:278.08px;">Player2 Fold - 55.43%</div>
<svg style="position:absolute;left:227px;top:299.92px" width="12.8" height="19.2" viewBox="0 0 4 6"><path d="M0.5 0.6 L3.4 3 L0.5 5.4 Z" fill="#fff" stroke="#888" stroke-width="0.7"/></svg>
<div class="t" style="left:255px;top:309.52px;">Player2 Raise to 11.12 - 19.29%</div>
<svg style="position:absolute;left:185.12px;top:331.36px" width="12.8" height="19.2" viewBox="0 0 4 6"><path d="M0.5 0.6 L3.4 3 L0.5 5.4 Z" fill="#fff" stroke="#888" stroke-width="0.7"/></svg>
<div class="t" style="left:213.12px;top:340.96px;">Player1 Fold - 57.99%</div>
<svg style="position:absolute;left:185.12px;top:362.8px" width="12.8" height="19.2" viewBox="0 0 4 6"><path d="M0.5 0.6 L3.4 3 L0.5 5.4 Z" fill="#fff" stroke="#888" stroke-width="0.7"/></svg>
<div class="t" style="left:213.12px;top:372.4px;">Player1 Raise to 11.00 - 0.65%</div>
<svg style="position:absolute;left:101.36px;top:394.24px" width="12.8" height="19.2" viewBox="0 0 4 6"><path d="M0.5 0.6 L3.4 3 L0.5 5.4 Z" fill="#fff" stroke="#888" stroke-width="0.7"/></svg>
<div class="t" style="left:129.36px;top:403.84px;">Player2 Bet 5.00 - 31.32%</div>
<svg style="position:absolute;left:59.48px;top:425.68px" width="12.8" height="19.2" viewBox="0 0 4 6"><path d="M0.5 0.6 L3.4 3 L0.5 5.4 Z" fill="#fff" stroke="#888" stroke-width="0.7"/></svg>
<div class="t" style="left:87.48px;top:435.28px;">Player1 Bet 5.00 - 0.34%</div>
</div>
<div class="pane" style="left:838.8px;top:1574.8px;width:736px;height:498.4px;background:#fff;overflow:hidden;">
<div style="left:0px;top:0px;width:736px;height:36.8px;background:linear-gradient(#ffffff,#f6f7f9 70%,#eceef1);"></div>
<div class="t" style="left:7.2px;top:20px;color:#222;">Turn Actions</div>
<svg style="position:absolute;left:16.8px;top:50.4px" width="14.4" height="14.4" viewBox="0 0 6 6"><path d="M6 0 L6 6 L0 6 Z" fill="#333"/></svg>
<div class="t" style="left:45.6px;top:58px;">Turn Th 9d 5s 3d - Nash Dist. 1.076</div>
<svg style="position:absolute;left:58.68px;top:81.84px" width="14.4" height="14.4" viewBox="0 0 6 6"><path d="M6 0 L6 6 L0 6 Z" fill="#333"/></svg>
<div class="t" style="left:87.48px;top:89.44px;">Player1 Check - 82.61%</div>
<svg style="position:absolute;left:100.56px;top:113.28px" width="14.4" height="14.4" viewBox="0 0 6 6"><path d="M6 0 L6 6 L0 6 Z" fill="#333"/></svg>
<div class="t" style="left:129.36px;top:120.88px;">Player2 Check - 98.28%</div>
<div class="t" style="left:171.24px;top:152.32px;">Player3 Check - 42.63%</div>
<svg style="position:absolute;left:142.44px;top:176.16px" width="14.4" height="14.4" viewBox="0 0 6 6"><path d="M6 0 L6 6 L0 6 Z" fill="#333"/></svg>
<div class="t" style="left:171.24px;top:183.76px;">Player3 Bet 8.80 - 57.37%</div>
<svg style="position:absolute;left:185.12px;top:205.6px" width="12.8" height="19.2" viewBox="0 0 4 6"><path d="M0.5 0.6 L3.4 3 L0.5 5.4 Z" fill="#fff" stroke="#888" stroke-width="0.7"/></svg>
<div class="t" style="left:213.12px;top:215.2px;">Player1 Call 8.80 - 51.80%</div>
<svg style="position:absolute;left:185.12px;top:237.04px" width="12.8" height="19.2" viewBox="0 0 4 6"><path d="M0.5 0.6 L3.4 3 L0.5 5.4 Z" fill="#fff" stroke="#888" stroke-width="0.7"/></svg>
<div class="t" style="left:213.12px;top:246.64px;">Player1 Fold - 47.91%</div>
<div style="left:208.32px;top:263.28px;width:522.88px;height:31.2px;background:#ececec;"></div>
<svg style="position:absolute;left:184.32px;top:270.48px" width="14.4" height="14.4" viewBox="0 0 6 6"><path d="M6 0 L6 6 L0 6 Z" fill="#333"/></svg>
<div class="t" style="left:213.12px;top:278.08px;">Player1 Raise to 26.40 - 0.27%</div>
<svg style="position:absolute;left:227px;top:299.92px" width="12.8" height="19.2" viewBox="0 0 4 6"><path d="M0.5 0.6 L3.4 3 L0.5 5.4 Z" fill="#fff" stroke="#888" stroke-width="0.7"/></svg>
<div class="t" style="left:255px;top:309.52px;">Player2 Call 26.40 - 3.54%</div>
<svg style="position:absolute;left:227px;top:331.36px" width="12.8" height="19.2" viewBox="0 0 4 6"><path d="M0.5 0.6 L3.4 3 L0.5 5.4 Z" fill="#fff" stroke="#888" stroke-width="0.7"/></svg>
<div class="t" style="left:255px;top:340.96px;">Player2 Fold - 95.32%</div>
<svg style="position:absolute;left:227px;top:362.8px" width="12.8" height="19.2" viewBox="0 0 4 6"><path d="M0.5 0.6 L3.4 3 L0.5 5.4 Z" fill="#fff" stroke="#888" stroke-width="0.7"/></svg>
<div class="t" style="left:255px;top:372.4px;">Player2 Raise to 94.30 - 1.14%</div>
<svg style="position:absolute;left:185.12px;top:394.24px" width="12.8" height="19.2" viewBox="0 0 4 6"><path d="M0.5 0.6 L3.4 3 L0.5 5.4 Z" fill="#fff" stroke="#888" stroke-width="0.7"/></svg>
<div class="t" style="left:213.12px;top:403.84px;">Player1 Raise to 94.30 - 0.02%</div>
<svg style="position:absolute;left:101.36px;top:425.68px" width="12.8" height="19.2" viewBox="0 0 4 6"><path d="M0.5 0.6 L3.4 3 L0.5 5.4 Z" fill="#fff" stroke="#888" stroke-width="0.7"/></svg>
<div class="t" style="left:129.36px;top:435.28px;">Player2 Bet 13.20 - 1.72%</div>
<svg style="position:absolute;left:59.48px;top:457.12px" width="12.8" height="19.2" viewBox="0 0 4 6"><path d="M0.5 0.6 L3.4 3 L0.5 5.4 Z" fill="#fff" stroke="#888" stroke-width="0.7"/></svg>
<div class="t" style="left:87.48px;top:466.72px;">Player1 Bet 13.20 - 17.39%</div>
</div>
<div class="pane" style="left:1616.8px;top:1574.8px;width:733.6px;height:498.4px;background:#f0f0f0;overflow:hidden;">
<div style="left:0px;top:0px;width:733.6px;height:36.8px;background:linear-gradient(#fafafa,#f0f0f0);"></div>
<div class="t" style="left:7.2px;top:20px;color:#8a8a8a;">River Actions</div>
</div>
</div>
</body></html>
